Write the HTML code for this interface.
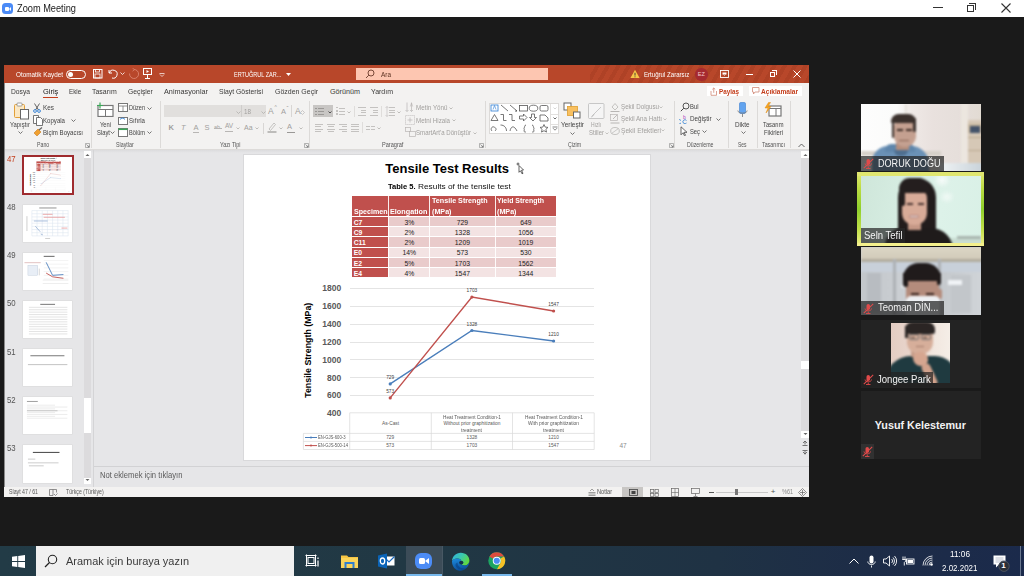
<!DOCTYPE html>
<html><head><meta charset="utf-8">
<style>
*{margin:0;padding:0;box-sizing:border-box}
html,body{width:1024px;height:576px;overflow:hidden;background:#1a1a1a;font-family:"Liberation Sans",sans-serif;position:relative}
.a{position:absolute}
.t{position:absolute;white-space:nowrap;line-height:1;transform-origin:0 0}
</style></head><body>
<div class="a" style="left:0;top:0;width:1024px;height:17px;background:#fff"></div>
<div class="a" style="left:2px;top:3px;width:11px;height:11px;border-radius:3.5px;background:#4b8bf7"></div>
<div class="a" style="left:4.5px;top:6.5px;width:4.5px;height:4px;border-radius:1px;background:#fff"></div>
<div class="a" style="left:8.5px;top:6.5px;width:0;height:0;border-top:2px solid transparent;border-bottom:2px solid transparent;border-right:2.5px solid #fff"></div>
<div class="t" style="left:17.00px;top:3.39px;font-size:10.5px;color:#1a1a1a;transform:scaleX(0.879)">Zoom Meeting</div>
<div class="a" style="left:933px;top:7px;width:10px;height:1px;background:#333"></div>
<div class="a" style="left:967px;top:4.5px;width:7px;height:7px;border:1px solid #333"></div>
<div class="a" style="left:969px;top:2.5px;width:7px;height:7px;border-top:1px solid #333;border-right:1px solid #333"></div>
<svg class="a" style="left:1000px;top:2px" width="12" height="12"><path d="M1.5 1.5L10.5 10.5M10.5 1.5L1.5 10.5" stroke="#333" stroke-width="1.1"/></svg>
<div class="a" style="left:4px;top:65px;width:805px;height:432px;background:#f3f2f1"></div>
<div class="a" style="left:4px;top:65px;width:805px;height:18px;background:#b8472a"></div>
<div class="a" style="left:590px;top:65px;width:219px;height:18px;background:repeating-linear-gradient(120deg,rgba(0,0,0,0) 0px,rgba(0,0,0,0) 5px,rgba(90,20,0,.10) 5px,rgba(90,20,0,.10) 9px)"></div>
<div class="t" style="left:15.70px;top:70.63px;font-size:7px;color:#fff;transform:scaleX(0.908)">Otomatik Kaydet</div>
<div class="a" style="left:66px;top:69.5px;width:20px;height:9px;border:1px solid #fff;border-radius:4.5px"></div>
<div class="a" style="left:68px;top:71.5px;width:5px;height:5px;border-radius:2.5px;background:#fff"></div>
<svg class="a" style="left:93px;top:69px" width="10" height="10"><rect x="0.5" y="0.5" width="8.5" height="8.5" fill="none" stroke="#fff" stroke-width="1"/><rect x="2.5" y="0.5" width="4" height="2.5" fill="none" stroke="#fff" stroke-width=".8"/><rect x="2" y="5" width="5" height="4" fill="none" stroke="#fff" stroke-width=".8"/></svg>
<svg class="a" style="left:107px;top:68px" width="12" height="12"><path d="M2 2v3h3M2.3 5A4 4 0 1 1 5 10" fill="none" stroke="#fff" stroke-width="1"/></svg>
<svg class="a" style="left:120px;top:72px" width="5" height="4"><path d="M.5 .5L2.5 2.5 4.5 .5" fill="none" stroke="#fff" stroke-width=".8"/></svg>
<svg class="a" style="left:128px;top:68px" width="12" height="12"><path d="M6 1.5A4.5 4.5 0 1 1 1.6 5.5" fill="none" stroke="#d9806a" stroke-width="1"/><path d="M4.5 .2L6.5 1.6 4.6 3.2" fill="none" stroke="#d9806a" stroke-width=".9"/></svg>
<svg class="a" style="left:143px;top:68px" width="10" height="12"><rect x="0.5" y="0.5" width="8" height="6" fill="none" stroke="#fff"/><path d="M3.5 2l2.5 1.5-2.5 1.5z" fill="#fff"/><path d="M4.5 7v3M2 10.5h5" stroke="#fff"/></svg>
<svg class="a" style="left:159px;top:72px" width="6" height="5"><path d="M.5 1.5h5M1 2.5L3 4.5 5 2.5" fill="none" stroke="#fff" stroke-width=".7"/></svg>
<div class="t" style="left:233.70px;top:70.63px;font-size:7px;color:#fff;transform:scaleX(0.790)">ERTUĞRUL ZAR...</div>
<svg class="a" style="left:286px;top:72.5px" width="5" height="4"><path d="M0 0h5L2.5 3z" fill="#fff"/></svg>
<div class="a" style="left:356px;top:67.5px;width:192px;height:12.5px;background:#fdc6b1"></div>
<svg class="a" style="left:365px;top:68.5px" width="10" height="10"><circle cx="6" cy="4" r="3" fill="none" stroke="#6a3a2a" stroke-width=".9"/><path d="M3.8 6.2L1 9" stroke="#6a3a2a" stroke-width=".9"/></svg>
<div class="t" style="left:381.00px;top:70.63px;font-size:7px;color:#5a3020;transform:scaleX(0.917)">Ara</div>
<svg class="a" style="left:630px;top:68.5px" width="10" height="10"><path d="M5 .8L9.6 9H.4z" fill="#f7c648"/><path d="M5 3.8v2.8M5 7.4v.9" stroke="#333" stroke-width=".9"/></svg>
<div class="t" style="left:643.60px;top:70.63px;font-size:7px;color:#fff;transform:scaleX(0.871)">Ertuğrul Zararsız</div>
<div class="a" style="left:695px;top:68px;width:12.5px;height:12.5px;border-radius:6.25px;background:#a52a30"></div>
<div class="t" style="left:697.78px;top:71.65px;font-size:5.5px;color:#f4c8c8">EZ</div>
<svg class="a" style="left:720px;top:69.5px" width="10" height="9"><rect x=".5" y=".5" width="8" height="7" fill="none" stroke="#fff" stroke-width=".9"/><path d="M2.5 2.5h4v2h-4z" fill="#fff"/><path d="M3.5 4.5L4.5 5.5 5.5 4.5" fill="none" stroke="#fff" stroke-width=".6"/></svg>
<div class="a" style="left:746px;top:74px;width:6.5px;height:1px;background:#fff"></div>
<div class="a" style="left:770px;top:71.5px;width:5px;height:5px;border:1px solid #fff"></div>
<div class="a" style="left:772px;top:70px;width:5px;height:5px;border-top:1px solid #fff;border-right:1px solid #fff"></div>
<svg class="a" style="left:792px;top:69px" width="10" height="10"><path d="M1.5 1.5L8.5 8.5M8.5 1.5L1.5 8.5" stroke="#fff" stroke-width="1"/></svg>
<div class="t" style="left:11.40px;top:88.03px;font-size:7.2px;color:#3b3a39;transform:scaleX(0.933)">Dosya</div>
<div class="t" style="left:43.00px;top:88.03px;font-size:7.2px;color:#222;transform:scaleX(1.035)">Giriş</div>
<div class="t" style="left:68.80px;top:88.03px;font-size:7.2px;color:#3b3a39;transform:scaleX(0.872)">Ekle</div>
<div class="t" style="left:92.30px;top:88.03px;font-size:7.2px;color:#3b3a39;transform:scaleX(0.966)">Tasarım</div>
<div class="t" style="left:128.00px;top:88.03px;font-size:7.2px;color:#3b3a39;transform:scaleX(0.940)">Geçişler</div>
<div class="t" style="left:164.00px;top:88.03px;font-size:7.2px;color:#3b3a39;transform:scaleX(1.010)">Animasyonlar</div>
<div class="t" style="left:219.00px;top:88.03px;font-size:7.2px;color:#3b3a39;transform:scaleX(0.949)">Slayt Gösterisi</div>
<div class="t" style="left:275.00px;top:88.03px;font-size:7.2px;color:#3b3a39;transform:scaleX(0.970)">Gözden Geçir</div>
<div class="t" style="left:330.00px;top:88.03px;font-size:7.2px;color:#3b3a39">Görünüm</div>
<div class="t" style="left:371.00px;top:88.03px;font-size:7.2px;color:#3b3a39;transform:scaleX(0.972)">Yardım</div>
<div class="a" style="left:43px;top:96.6px;width:15.3px;height:1.6px;background:#c43e1c"></div>
<div class="a" style="left:707px;top:85.7px;width:36px;height:10.7px;background:#fff"></div>
<svg class="a" style="left:709.5px;top:86.5px" width="8" height="9"><path d="M1 4v4.3h5.5V4M3.75 1v4.8M2.3 2.4L3.75 1l1.45 1.4" fill="none" stroke="#d08a78" stroke-width=".8"/></svg>
<div class="t" style="left:719.00px;top:87.73px;font-size:7.2px;color:#c43e1c;font-weight:bold;transform:scaleX(0.878)">Paylaş</div>
<div class="a" style="left:749px;top:85.7px;width:53px;height:10.7px;background:#fff"></div>
<svg class="a" style="left:752px;top:87px" width="8" height="8"><path d="M.5 .5h6.5v4.5H3L1.5 7V5H.5z" fill="none" stroke="#d08a78" stroke-width=".8"/></svg>
<div class="t" style="left:761.00px;top:87.73px;font-size:7.2px;color:#c43e1c;font-weight:bold;transform:scaleX(0.917)">Açıklamalar</div>
<svg class="a" style="left:13px;top:102px" width="18" height="18"><rect x="1.5" y="2.5" width="10" height="13" rx="1" fill="#fbe8c4" stroke="#e2a038" stroke-width="1"/><rect x="4" y="1" width="5" height="3" rx=".8" fill="#fff" stroke="#888" stroke-width=".8"/><rect x="7.5" y="7.5" width="8" height="9.5" fill="#fff" stroke="#666" stroke-width="1"/></svg>
<div class="t" style="left:10.20px;top:121.13px;font-size:7px;color:#444;transform:scaleX(0.847)">Yapıştır</div>
<svg class="a" style="left:17.5px;top:131.0px" width="5" height="3.0"><path d="M.5 .5L2.5 2.5L4.5 .5" fill="none" stroke="#555" stroke-width=".8"/></svg>
<svg class="a" style="left:33px;top:103px" width="8" height="10"><path d="M1.5 .5L5.5 7M6.5 .5L2.5 7" stroke="#555" stroke-width=".9" fill="none"/><circle cx="2" cy="8" r="1.4" fill="none" stroke="#2b7cd3" stroke-width=".9"/><circle cx="6" cy="8" r="1.4" fill="none" stroke="#2b7cd3" stroke-width=".9"/></svg>
<div class="t" style="left:43.00px;top:104.33px;font-size:7px;color:#444;transform:scaleX(0.912)">Kes</div>
<svg class="a" style="left:33px;top:115px" width="10" height="11"><path d="M.5 .5h5v8h-5z" fill="#fff" stroke="#555" stroke-width=".8"/><path d="M3.5 2.5h4l2 2v6h-6z" fill="#fff" stroke="#555" stroke-width=".8"/></svg>
<div class="t" style="left:43.00px;top:116.63px;font-size:7px;color:#444;transform:scaleX(0.870)">Kopyala</div>
<svg class="a" style="left:71.0px;top:119.0px" width="5" height="3.0"><path d="M.5 .5L2.5 2.5L4.5 .5" fill="none" stroke="#555" stroke-width=".8"/></svg>
<svg class="a" style="left:33px;top:127px" width="10" height="10"><path d="M1 6l4-4 3 3-4 4z" fill="#f0a030" stroke="#c77a20" stroke-width=".6"/><path d="M6 3l3-2.5" stroke="#666" stroke-width="1.2"/></svg>
<div class="t" style="left:43.00px;top:129.03px;font-size:7px;color:#444;transform:scaleX(0.871)">Biçim Boyacısı</div>
<div class="t" style="left:36.80px;top:141.87px;font-size:6.5px;color:#555;transform:scaleX(0.803)">Pano</div>
<svg class="a" style="left:85px;top:142.5px" width="5" height="5"><path d="M.5 .5h4v4h-4z" fill="none" stroke="#888" stroke-width=".6"/><path d="M1.5 1.5L4 4M2.5 4H4V2.5" fill="none" stroke="#666" stroke-width=".6"/></svg>
<div class="a" style="left:90.5px;top:101px;width:1px;height:47px;background:#dcdad8"></div>
<svg class="a" style="left:96px;top:102px" width="18" height="15"><rect x="2" y="3.5" width="15" height="11" fill="#fff" stroke="#777" stroke-width="1.2"/><path d="M2 7.5h15M9.5 7.5v7" stroke="#777" stroke-width="1"/><path d="M4 .5v6M1 3.5h6" stroke="#3aa757" stroke-width="1.2"/></svg>
<div class="t" style="left:99.80px;top:120.83px;font-size:7px;color:#444;transform:scaleX(0.822)">Yeni</div>
<div class="t" style="left:96.50px;top:128.83px;font-size:7px;color:#444;transform:scaleX(0.835)">Slayt</div>
<svg class="a" style="left:109.5px;top:131.0px" width="5" height="3.0"><path d="M.5 .5L2.5 2.5L4.5 .5" fill="none" stroke="#555" stroke-width=".8"/></svg>
<svg class="a" style="left:118px;top:103px" width="10" height="9"><rect x=".5" y=".5" width="9" height="8" fill="#fff" stroke="#777" stroke-width="1"/><path d="M.5 3h9M5 3v5.5" stroke="#777" stroke-width=".8"/></svg>
<div class="t" style="left:129.00px;top:104.23px;font-size:7px;color:#444;transform:scaleX(0.791)">Düzen</div>
<svg class="a" style="left:147.0px;top:106.6px" width="5" height="3.0"><path d="M.5 .5L2.5 2.5L4.5 .5" fill="none" stroke="#555" stroke-width=".8"/></svg>
<svg class="a" style="left:118px;top:115.5px" width="10" height="9"><rect x=".5" y="1.5" width="9" height="7" fill="#fff" stroke="#777" stroke-width="1"/><path d="M2 3.5a3 3 0 0 1 5 0" fill="none" stroke="#2b7cd3" stroke-width=".9"/></svg>
<div class="t" style="left:129.00px;top:116.63px;font-size:7px;color:#444;transform:scaleX(0.874)">Sıfırla</div>
<svg class="a" style="left:118px;top:127.5px" width="10" height="9"><rect x=".5" y=".5" width="9" height="8" fill="#fff" stroke="#777" stroke-width="1"/><path d="M.5 1.3h9" stroke="#3aa757" stroke-width="1.5"/></svg>
<div class="t" style="left:129.00px;top:128.93px;font-size:7px;color:#444;transform:scaleX(0.806)">Bölüm</div>
<svg class="a" style="left:147.0px;top:131.3px" width="5" height="3.0"><path d="M.5 .5L2.5 2.5L4.5 .5" fill="none" stroke="#555" stroke-width=".8"/></svg>
<div class="t" style="left:116.00px;top:141.87px;font-size:6.5px;color:#555;transform:scaleX(0.816)">Slaytlar</div>
<div class="a" style="left:160px;top:101px;width:1px;height:47px;background:#dcdad8"></div>
<div class="a" style="left:164.4px;top:105.3px;width:76.6px;height:12.2px;background:#e1dfdd"></div>
<div class="a" style="left:241px;top:105.3px;width:24.6px;height:12.2px;background:#e1dfdd;border-left:1px solid #cfcdcb"></div>
<svg class="a" style="left:236.0px;top:110.5px" width="5" height="3.0"><path d="M.5 .5L2.5 2.5L4.5 .5" fill="none" stroke="#b0aeac" stroke-width=".8"/></svg>
<svg class="a" style="left:260.5px;top:110.5px" width="5" height="3.0"><path d="M.5 .5L2.5 2.5L4.5 .5" fill="none" stroke="#b0aeac" stroke-width=".8"/></svg>
<div class="t" style="left:244.00px;top:108.13px;font-size:7px;color:#a19f9d;transform:scaleX(0.898)">18</div>
<div class="t" style="left:268.00px;top:106.90px;font-size:8.5px;color:#a19f9d">A</div>
<div class="t" style="left:274.50px;top:105.09px;font-size:5px;color:#a19f9d">^</div>
<div class="t" style="left:281.00px;top:107.89px;font-size:7.5px;color:#a19f9d">A</div>
<div class="t" style="left:286.50px;top:105.11px;font-size:6px;color:#a19f9d">ˇ</div>
<div class="a" style="left:291px;top:105px;width:1px;height:12px;background:#d8d6d4"></div>
<div class="t" style="left:295.00px;top:106.90px;font-size:8.5px;color:#a19f9d">A</div>
<svg class="a" style="left:300px;top:110px" width="5" height="5"><path d="M.5 2.5L2.5 .5 4.5 2.5 2.5 4.5z" fill="none" stroke="#b8b6b4" stroke-width=".7"/></svg>
<div class="t" style="left:168.50px;top:124.19px;font-size:7.5px;color:#a19f9d;font-weight:bold">K</div>
<div class="t" style="left:181.00px;top:124.19px;font-size:7.5px;color:#a19f9d;font-style:italic">T</div>
<div class="t" style="left:193.50px;top:124.19px;font-size:7.5px;color:#a19f9d">A</div>
<div class="a" style="left:193px;top:131.5px;width:6px;height:.8px;background:#b8b6b4"></div>
<div class="t" style="left:204.50px;top:124.19px;font-size:7.5px;color:#a19f9d">S</div>
<div class="t" style="left:214.00px;top:125.15px;font-size:5.5px;color:#a19f9d">ab</div>
<div class="a" style="left:213.5px;top:127.5px;width:8px;height:.7px;background:#b8b6b4"></div>
<div class="t" style="left:225.00px;top:123.37px;font-size:6.5px;color:#a19f9d">AV</div>
<div class="a" style="left:225px;top:131px;width:8px;height:.6px;background:#b8b6b4"></div>
<svg class="a" style="left:236.0px;top:127.25px" width="4" height="2.5"><path d="M.5 .5L2.0 2.0L3.5 .5" fill="none" stroke="#b0aeac" stroke-width=".8"/></svg>
<div class="t" style="left:244.00px;top:124.43px;font-size:7px;color:#a19f9d">Aa</div>
<svg class="a" style="left:255.0px;top:127.25px" width="4" height="2.5"><path d="M.5 .5L2.0 2.0L3.5 .5" fill="none" stroke="#b0aeac" stroke-width=".8"/></svg>
<div class="a" style="left:263px;top:123px;width:1px;height:11px;background:#d8d6d4"></div>
<svg class="a" style="left:267px;top:121px" width="10" height="12"><path d="M2 8l5-6 1.5 1.5-5 6z" fill="none" stroke="#b8b6b4" stroke-width=".8"/><path d="M.5 11h9" stroke="#9a9896" stroke-width="1.2"/></svg>
<svg class="a" style="left:279.0px;top:127.25px" width="4" height="2.5"><path d="M.5 .5L2.0 2.0L3.5 .5" fill="none" stroke="#b0aeac" stroke-width=".8"/></svg>
<div class="t" style="left:287.00px;top:123.19px;font-size:7.5px;color:#a19f9d">A</div>
<div class="a" style="left:286.5px;top:131.5px;width:8px;height:1.2px;background:#9a9896"></div>
<svg class="a" style="left:298.5px;top:127.25px" width="4" height="2.5"><path d="M.5 .5L2.0 2.0L3.5 .5" fill="none" stroke="#b0aeac" stroke-width=".8"/></svg>
<div class="t" style="left:220.00px;top:141.87px;font-size:6.5px;color:#555;transform:scaleX(0.838)">Yazı Tipi</div>
<svg class="a" style="left:304px;top:142.5px" width="5" height="5"><path d="M.5 .5h4v4h-4z" fill="none" stroke="#888" stroke-width=".6"/><path d="M1.5 1.5L4 4M2.5 4H4V2.5" fill="none" stroke="#666" stroke-width=".6"/></svg>
<div class="a" style="left:308.5px;top:101px;width:1px;height:47px;background:#dcdad8"></div>
<div class="a" style="left:313px;top:105.4px;width:20px;height:12px;background:#c8c6c4"></div>
<div class="a" style="left:315px;top:107.5px;width:1.5px;height:1.2px;background:#9a9896"></div>
<div class="a" style="left:318px;top:107.5px;width:6px;height:.8px;background:#9a9896"></div>
<div class="a" style="left:315px;top:110.7px;width:1.5px;height:1.2px;background:#9a9896"></div>
<div class="a" style="left:318px;top:110.7px;width:6px;height:.8px;background:#9a9896"></div>
<div class="a" style="left:315px;top:113.9px;width:1.5px;height:1.2px;background:#9a9896"></div>
<div class="a" style="left:318px;top:113.9px;width:6px;height:.8px;background:#9a9896"></div>
<svg class="a" style="left:327.5px;top:110.75px" width="4" height="2.5"><path d="M.5 .5L2.0 2.0L3.5 .5" fill="none" stroke="#333" stroke-width=".8"/></svg>
<div class="a" style="left:336px;top:107.0px;width:1.5px;height:1.4px;background:#c4c2c0"></div>
<div class="a" style="left:339px;top:107.5px;width:6px;height:.8px;background:#c4c2c0"></div>
<div class="a" style="left:336px;top:110.2px;width:1.5px;height:1.4px;background:#c4c2c0"></div>
<div class="a" style="left:339px;top:110.7px;width:6px;height:.8px;background:#c4c2c0"></div>
<div class="a" style="left:336px;top:113.4px;width:1.5px;height:1.4px;background:#c4c2c0"></div>
<div class="a" style="left:339px;top:113.9px;width:6px;height:.8px;background:#c4c2c0"></div>
<svg class="a" style="left:347.0px;top:110.75px" width="4" height="2.5"><path d="M.5 .5L2.0 2.0L3.5 .5" fill="none" stroke="#b0aeac" stroke-width=".8"/></svg>
<div class="a" style="left:354px;top:106px;width:1px;height:11px;background:#dfdddb"></div>
<div class="a" style="left:358px;top:107.0px;width:8px;height:.8px;background:#c4c2c0"></div>
<div class="a" style="left:361px;top:109.5px;width:5px;height:.8px;background:#c4c2c0"></div>
<div class="a" style="left:361px;top:112.0px;width:5px;height:.8px;background:#c4c2c0"></div>
<div class="a" style="left:358px;top:114.5px;width:8px;height:.8px;background:#c4c2c0"></div>
<div class="a" style="left:370px;top:107.0px;width:8px;height:.8px;background:#c4c2c0"></div>
<div class="a" style="left:373px;top:109.5px;width:5px;height:.8px;background:#c4c2c0"></div>
<div class="a" style="left:373px;top:112.0px;width:5px;height:.8px;background:#c4c2c0"></div>
<div class="a" style="left:370px;top:114.5px;width:8px;height:.8px;background:#c4c2c0"></div>
<div class="a" style="left:381px;top:106px;width:1px;height:11px;background:#dfdddb"></div>
<div class="a" style="left:389px;top:107.0px;width:6px;height:.8px;background:#c4c2c0"></div>
<div class="a" style="left:389px;top:109.5px;width:6px;height:.8px;background:#c4c2c0"></div>
<div class="a" style="left:389px;top:112.0px;width:6px;height:.8px;background:#c4c2c0"></div>
<div class="a" style="left:389px;top:114.5px;width:6px;height:.8px;background:#c4c2c0"></div>
<svg class="a" style="left:385px;top:106px" width="4" height="11"><path d="M2 .5v10M.5 2L2 .5 3.5 2M.5 9L2 10.5 3.5 9" fill="none" stroke="#c4c2c0" stroke-width=".7"/></svg>
<svg class="a" style="left:396.5px;top:110.75px" width="4" height="2.5"><path d="M.5 .5L2.0 2.0L3.5 .5" fill="none" stroke="#b0aeac" stroke-width=".8"/></svg>
<div class="a" style="left:315px;top:124.0px;width:8px;height:.8px;background:#c4c2c0"></div>
<div class="a" style="left:315px;top:126.3px;width:5.5px;height:.8px;background:#c4c2c0"></div>
<div class="a" style="left:315px;top:128.6px;width:8px;height:.8px;background:#c4c2c0"></div>
<div class="a" style="left:315px;top:130.9px;width:5.5px;height:.8px;background:#c4c2c0"></div>
<div class="a" style="left:327px;top:124.0px;width:8px;height:.8px;background:#c4c2c0"></div>
<div class="a" style="left:328.25px;top:126.3px;width:5.5px;height:.8px;background:#c4c2c0"></div>
<div class="a" style="left:327px;top:128.6px;width:8px;height:.8px;background:#c4c2c0"></div>
<div class="a" style="left:328.25px;top:130.9px;width:5.5px;height:.8px;background:#c4c2c0"></div>
<div class="a" style="left:339px;top:124.0px;width:8px;height:.8px;background:#c4c2c0"></div>
<div class="a" style="left:341.5px;top:126.3px;width:5.5px;height:.8px;background:#c4c2c0"></div>
<div class="a" style="left:339px;top:128.6px;width:8px;height:.8px;background:#c4c2c0"></div>
<div class="a" style="left:341.5px;top:130.9px;width:5.5px;height:.8px;background:#c4c2c0"></div>
<div class="a" style="left:351px;top:124.0px;width:8px;height:.8px;background:#c4c2c0"></div>
<div class="a" style="left:351px;top:126.3px;width:8px;height:.8px;background:#c4c2c0"></div>
<div class="a" style="left:351px;top:128.6px;width:8px;height:.8px;background:#c4c2c0"></div>
<div class="a" style="left:351px;top:130.9px;width:8px;height:.8px;background:#c4c2c0"></div>
<div class="a" style="left:362px;top:122px;width:1px;height:11px;background:#dfdddb"></div>
<div class="a" style="left:366px;top:126px;width:3.5px;height:.8px;background:#c4c2c0"></div><div class="a" style="left:371px;top:126px;width:3.5px;height:.8px;background:#c4c2c0"></div>
<div class="a" style="left:366px;top:129px;width:3.5px;height:.8px;background:#c4c2c0"></div><div class="a" style="left:371px;top:129px;width:3.5px;height:.8px;background:#c4c2c0"></div>
<svg class="a" style="left:376.5px;top:127.25px" width="4" height="2.5"><path d="M.5 .5L2.0 2.0L3.5 .5" fill="none" stroke="#b0aeac" stroke-width=".8"/></svg>
<svg class="a" style="left:405px;top:102px" width="9" height="11"><path d="M2 .5v9M.5 8L2 9.5 3.5 8M6.5 .5v9M5 8l1.5 1.5L8 8" fill="none" stroke="#b8b6b4" stroke-width=".7"/><path d="M5.3 4.5l1.2-3.5 1.2 3.5" fill="none" stroke="#b8b6b4" stroke-width=".6"/></svg>
<div class="t" style="left:415.50px;top:103.93px;font-size:7px;color:#a19f9d;transform:scaleX(0.892)">Metin Yönü</div>
<svg class="a" style="left:448.5px;top:106.55px" width="4" height="2.5"><path d="M.5 .5L2.0 2.0L3.5 .5" fill="none" stroke="#b0aeac" stroke-width=".8"/></svg>
<svg class="a" style="left:404.5px;top:115px" width="10" height="10"><rect x=".5" y=".5" width="9" height="9" fill="none" stroke="#b8b6b4" stroke-width=".7" stroke-dasharray="1.2 .8"/><path d="M2.5 5h5M5 2.5v5" stroke="#b8b6b4" stroke-width=".7"/></svg>
<div class="t" style="left:415.50px;top:116.63px;font-size:7px;color:#a19f9d;transform:scaleX(0.883)">Metni Hizala</div>
<svg class="a" style="left:451.5px;top:119.25px" width="4" height="2.5"><path d="M.5 .5L2.0 2.0L3.5 .5" fill="none" stroke="#b0aeac" stroke-width=".8"/></svg>
<svg class="a" style="left:404.5px;top:127px" width="11" height="10"><rect x=".5" y=".5" width="5" height="4" fill="none" stroke="#b8b6b4" stroke-width=".7"/><rect x="4.5" y="4.5" width="6" height="5" fill="none" stroke="#b8b6b4" stroke-width=".7"/></svg>
<div class="t" style="left:415.50px;top:128.93px;font-size:7px;color:#a19f9d;transform:scaleX(0.870)">SmartArt'a Dönüştür</div>
<svg class="a" style="left:472.5px;top:131.55px" width="4" height="2.5"><path d="M.5 .5L2.0 2.0L3.5 .5" fill="none" stroke="#b0aeac" stroke-width=".8"/></svg>
<div class="t" style="left:381.60px;top:142.17px;font-size:6.5px;color:#555;transform:scaleX(0.858)">Paragraf</div>
<svg class="a" style="left:479px;top:142.5px" width="5" height="5"><path d="M.5 .5h4v4h-4z" fill="none" stroke="#888" stroke-width=".6"/><path d="M1.5 1.5L4 4M2.5 4H4V2.5" fill="none" stroke="#666" stroke-width=".6"/></svg>
<div class="a" style="left:484.6px;top:101px;width:1px;height:47px;background:#dcdad8"></div>
<div class="a" style="left:488.8px;top:102.9px;width:70px;height:31.3px;background:#fff;border:1px solid #dcdad8"></div>
<div class="a" style="left:550.3px;top:103.5px;width:1px;height:30px;background:#e2e0de"></div>
<div class="a" style="left:550.8px;top:113.5px;width:7.5px;height:1px;background:#e2e0de"></div><div class="a" style="left:550.8px;top:123.5px;width:7.5px;height:1px;background:#e2e0de"></div>
<svg class="a" style="left:553.0px;top:107.25px" width="4" height="2.5"><path d="M.5 .5L2.0 2.0L3.5 .5" fill="none" stroke="#ccc" stroke-width=".8"/></svg>
<svg class="a" style="left:553.0px;top:117.25px" width="4" height="2.5"><path d="M.5 .5L2.0 2.0L3.5 .5" fill="none" stroke="#444" stroke-width=".8"/></svg>
<svg class="a" style="left:552px;top:126px" width="6" height="5"><path d="M.5 1h5M1 2.2l2 2 2-2" fill="none" stroke="#555" stroke-width=".7"/></svg>
<svg class="a" style="left:490px;top:104px" width="60" height="30" fill="none" stroke="#555" stroke-width=".8"><rect x="1" y="1" width="7" height="6" stroke="#2b7cd3"/><path d="M3 5.5l1.5-4 1.5 4" stroke="#2b7cd3" stroke-width=".6"/><path d="M11 1l7 6M20 1l7 6"/><path d="M25.5 6l1.5 1-1.8.3" /><rect x="29.5" y="1.5" width="8" height="5.5"/><ellipse cx="43.5" cy="4.2" rx="4.3" ry="3"/><rect x="50" y="1.5" width="8" height="5.5" rx="1.5"/><path d="M1 16.5l3.5-6 3.5 6z"/><path d="M10.5 10.5h3v6h3"/><path d="M19 10.5h3v6h3"/><path d="M29.5 12h4v-2l3.5 3.5-3.5 3.5v-2h-4z"/><path d="M41.5 10h3v3.5h2l-3.5 3.5-3.5-3.5h2z"/><path d="M50 17v-6h5l3 3v3z"/><path d="M2 27c-2-2 0-5 2-4s3 2 1 4M10.5 21c4 0 6 3 6 6M20 27c1-5 4-6 7 0M36 21c-2 0-1 3-2 3s1 0 0 3c0 1 1 1 2 1M42 21c2 0 1 3 2 3s-1 0 0 3c0 1-1 1-2 1"/><path d="M54 20.5l1.2 2.6 2.8.3-2.1 1.9.6 2.8-2.5-1.4-2.5 1.4.6-2.8-2.1-1.9 2.8-.3z"/></svg>
<svg class="a" style="left:563px;top:102px" width="18" height="17"><rect x="1" y="1" width="7" height="7" fill="#fff" stroke="#666" stroke-width="1"/><rect x="4.5" y="4.5" width="10" height="9" fill="#f8c060" stroke="#e0a030" stroke-width=".8"/><rect x="10.5" y="10" width="6.5" height="6" fill="#fff" stroke="#666" stroke-width="1"/></svg>
<div class="t" style="left:560.50px;top:121.03px;font-size:7px;color:#444;transform:scaleX(0.919)">Yerleştir</div>
<svg class="a" style="left:570.0px;top:131.5px" width="5" height="3.0"><path d="M.5 .5L2.5 2.5L4.5 .5" fill="none" stroke="#555" stroke-width=".8"/></svg>
<svg class="a" style="left:587.5px;top:102.5px" width="17" height="16"><rect x=".5" y=".5" width="15.5" height="15" rx="1" fill="#f5f5f5" stroke="#bbb" stroke-width=".8"/><path d="M4 13l9-9" stroke="#c8c8c8" stroke-width="1"/><path d="M3 14c2-.5 2.5-1.5 3-3" fill="none" stroke="#bbb" stroke-width=".8"/></svg>
<div class="t" style="left:591.00px;top:121.03px;font-size:7px;color:#a19f9d;transform:scaleX(0.714)">Hızlı</div>
<div class="t" style="left:589.00px;top:129.03px;font-size:7px;color:#a19f9d;transform:scaleX(0.856)">Stiller</div>
<svg class="a" style="left:605.0px;top:131.65px" width="4" height="2.5"><path d="M.5 .5L2.0 2.0L3.5 .5" fill="none" stroke="#b8b6b4" stroke-width=".8"/></svg>
<svg class="a" style="left:610px;top:102px" width="10" height="10"><path d="M2 5l3-3.5 3 3.5-3 3z" fill="none" stroke="#b8b6b4" stroke-width=".8"/><path d="M.5 9.5h9" stroke="#b8b6b4" stroke-width="1"/></svg>
<div class="t" style="left:620.50px;top:103.43px;font-size:7px;color:#a19f9d;transform:scaleX(0.888)">Şekil Dolgusu</div>
<svg class="a" style="left:659.0px;top:106.05px" width="4" height="2.5"><path d="M.5 .5L2.0 2.0L3.5 .5" fill="none" stroke="#b8b6b4" stroke-width=".8"/></svg>
<svg class="a" style="left:610px;top:113.5px" width="10" height="10"><rect x=".5" y=".5" width="7" height="6" fill="none" stroke="#b8b6b4" stroke-width=".7"/><path d="M3 5l4-4" stroke="#b8b6b4" stroke-width=".9"/><path d="M.5 9h9" stroke="#b8b6b4" stroke-width="1"/></svg>
<div class="t" style="left:620.50px;top:115.13px;font-size:7px;color:#a19f9d;transform:scaleX(0.893)">Şekil Ana Hattı</div>
<svg class="a" style="left:662.5px;top:117.75px" width="4" height="2.5"><path d="M.5 .5L2.0 2.0L3.5 .5" fill="none" stroke="#b8b6b4" stroke-width=".8"/></svg>
<svg class="a" style="left:610px;top:125.5px" width="10" height="10"><ellipse cx="5" cy="5" rx="4.3" ry="3.5" fill="none" stroke="#b8b6b4" stroke-width=".8"/><path d="M1.5 7.5l7-5" stroke="#b8b6b4" stroke-width=".7"/></svg>
<div class="t" style="left:620.50px;top:126.83px;font-size:7px;color:#a19f9d;transform:scaleX(0.943)">Şekil Efektleri</div>
<svg class="a" style="left:660.5px;top:129.45px" width="4" height="2.5"><path d="M.5 .5L2.0 2.0L3.5 .5" fill="none" stroke="#b8b6b4" stroke-width=".8"/></svg>
<div class="t" style="left:568.00px;top:141.87px;font-size:6.5px;color:#555;transform:scaleX(0.800)">Çizim</div>
<svg class="a" style="left:668.5px;top:142.5px" width="5" height="5"><path d="M.5 .5h4v4h-4z" fill="none" stroke="#888" stroke-width=".6"/><path d="M1.5 1.5L4 4M2.5 4H4V2.5" fill="none" stroke="#666" stroke-width=".6"/></svg>
<div class="a" style="left:674px;top:101px;width:1px;height:47px;background:#dcdad8"></div>
<svg class="a" style="left:679.5px;top:102px" width="10" height="10"><circle cx="6" cy="4" r="3" fill="none" stroke="#444" stroke-width=".9"/><path d="M3.8 6.2L.8 9.2" stroke="#444" stroke-width="1"/></svg>
<div class="t" style="left:690.00px;top:103.13px;font-size:7px;color:#444;transform:scaleX(0.840)">Bul</div>
<svg class="a" style="left:678.5px;top:114px" width="10" height="10"><text x="4" y="4.5" font-size="5" fill="#b146c2" font-family="Liberation Sans">b</text><path d="M2 6.5a2 2 0 1 0 0 2.5" fill="none" stroke="#2b7cd3" stroke-width=".8"/><path d="M7.5 6.5a2 2 0 1 0 0 2.5" fill="none" stroke="#2b7cd3" stroke-width=".8"/></svg>
<div class="t" style="left:690.00px;top:115.43px;font-size:7px;color:#444;transform:scaleX(0.906)">Değiştir</div>
<svg class="a" style="left:716.0px;top:117.8px" width="5" height="3.0"><path d="M.5 .5L2.5 2.5L4.5 .5" fill="none" stroke="#555" stroke-width=".8"/></svg>
<svg class="a" style="left:680px;top:126px" width="8" height="10"><path d="M1 .8v8l2-2 1.5 3 1-.5-1.5-3h3z" fill="#fff" stroke="#444" stroke-width=".8"/></svg>
<div class="t" style="left:690.00px;top:127.63px;font-size:7px;color:#444;transform:scaleX(0.829)">Seç</div>
<svg class="a" style="left:701.5px;top:130.0px" width="5" height="3.0"><path d="M.5 .5L2.5 2.5L4.5 .5" fill="none" stroke="#555" stroke-width=".8"/></svg>
<div class="t" style="left:687.00px;top:141.87px;font-size:6.5px;color:#555;transform:scaleX(0.806)">Düzenleme</div>
<div class="a" style="left:727.7px;top:101px;width:1px;height:47px;background:#dcdad8"></div>
<svg class="a" style="left:737px;top:102px" width="11" height="16"><rect x="2.5" y=".5" width="6" height="11" rx="1.3" fill="#63a4ef" stroke="#3c7fd0" stroke-width=".6"/><path d="M.8 8.5c0 3.5 9.4 3.5 9.4 0" fill="none" stroke="#777" stroke-width=".8"/><path d="M5.5 12v3" stroke="#777" stroke-width=".8"/></svg>
<div class="t" style="left:735.25px;top:121.03px;font-size:7px;color:#444;transform:scaleX(0.909)">Dikte</div>
<svg class="a" style="left:740.5px;top:131.3px" width="5" height="3.0"><path d="M.5 .5L2.5 2.5L4.5 .5" fill="none" stroke="#555" stroke-width=".8"/></svg>
<div class="t" style="left:737.75px;top:141.87px;font-size:6.5px;color:#555;transform:scaleX(0.759)">Ses</div>
<div class="a" style="left:757.4px;top:101px;width:1px;height:47px;background:#dcdad8"></div>
<svg class="a" style="left:764px;top:102px" width="18" height="15"><rect x="5" y="4" width="12" height="10" fill="#fff" stroke="#777" stroke-width="1.2"/><path d="M5 6.5h12M12 6.5v7.5" stroke="#777" stroke-width="1"/><path d="M4.5 .5L1 6h3l-2 5 5-6.5H4l2.5-4z" fill="#f5a623" stroke="#e08a10" stroke-width=".5"/></svg>
<div class="t" style="left:763.25px;top:121.03px;font-size:7px;color:#444;transform:scaleX(0.823)">Tasarım</div>
<div class="t" style="left:764.00px;top:129.43px;font-size:7px;color:#444;transform:scaleX(0.842)">Fikirleri</div>
<div class="t" style="left:762.00px;top:141.87px;font-size:6.5px;color:#555;transform:scaleX(0.816)">Tasarımcı</div>
<div class="a" style="left:789.6px;top:101px;width:1px;height:47px;background:#dcdad8"></div>
<svg class="a" style="left:798px;top:143px" width="7" height="5"><path d="M.5 4L3.5 1 6.5 4" fill="none" stroke="#555" stroke-width=".9"/></svg>
<div class="a" style="left:4px;top:149px;width:805px;height:1px;background:#dddbd9"></div>
<div class="a" style="left:4px;top:150px;width:805px;height:337px;background:#e6e6e8"></div>
<div class="a" style="left:4px;top:150px;width:805px;height:3px;background:linear-gradient(#dcdcde,#e6e6e8)"></div>
<div class="a" style="left:4px;top:83px;width:1px;height:414px;background:#8a8a8a"></div>
<div class="a" style="left:83.5px;top:151px;width:7.5px;height:332px;background:#dcdbdd"></div>
<div class="a" style="left:84px;top:151px;width:6.5px;height:7px;background:#fff"></div>
<svg class="a" style="left:85px;top:153px" width="5" height="3"><path d="M.5 3L2.5 1 4.5 3z" fill="#666"/></svg>
<div class="a" style="left:84px;top:477.5px;width:6.5px;height:6px;background:#fff"></div>
<svg class="a" style="left:85px;top:479px" width="5" height="3"><path d="M.5 0L2.5 2 4.5 0z" fill="#666"/></svg>
<div class="a" style="left:84px;top:397.5px;width:6.5px;height:35.5px;background:#fff"></div>
<div class="a" style="left:93px;top:150px;width:1px;height:337px;background:#d4d4d6"></div>
<div class="t" style="left:6.60px;top:155.36px;font-size:8.8px;color:#c43e1c;transform:scaleX(0.888)">47</div>
<div class="a" style="left:21.5px;top:154.5px;width:52.5px;height:40.5px;border:2px solid #9f2b2f;background:#fff"></div>
<div class="t" style="left:6.60px;top:203.36px;font-size:8.8px;color:#555;transform:scaleX(0.888)">48</div>
<div class="a" style="left:22.9px;top:204.5px;width:49.3px;height:37.2px;background:#fff;box-shadow:0 0 0 .5px #d8d8d8"></div>
<svg class="a" style="left:22.9px;top:204.5px" width="49.3" height="37.2"><path d="M16.269 2.9760000000000004H33.524" stroke="#888" stroke-width=".9"/><path d="M8.873999999999999 5.58H45.356" stroke="#d9e2ef" stroke-width=".5"/><path d="M8.873999999999999 8.742H45.356" stroke="#d9e2ef" stroke-width=".5"/><path d="M8.873999999999999 11.904000000000002H45.356" stroke="#d9e2ef" stroke-width=".5"/><path d="M8.873999999999999 15.066000000000003H45.356" stroke="#d9e2ef" stroke-width=".5"/><path d="M8.873999999999999 18.228H45.356" stroke="#d9e2ef" stroke-width=".5"/><path d="M8.873999999999999 21.390000000000004H45.356" stroke="#d9e2ef" stroke-width=".5"/><path d="M8.873999999999999 24.552000000000003H45.356" stroke="#d9e2ef" stroke-width=".5"/><path d="M8.873999999999999 27.714000000000006H45.356" stroke="#d9e2ef" stroke-width=".5"/><path d="M8.873999999999999 30.876000000000005H45.356" stroke="#d9e2ef" stroke-width=".5"/><path d="M8.873999999999999 5.58V30.876" stroke="#d9e2ef" stroke-width=".5"/><path d="M14.050499999999998 5.58V30.876" stroke="#d9e2ef" stroke-width=".5"/><path d="M19.227 5.58V30.876" stroke="#d9e2ef" stroke-width=".5"/><path d="M24.403499999999998 5.58V30.876" stroke="#d9e2ef" stroke-width=".5"/><path d="M29.58 5.58V30.876" stroke="#d9e2ef" stroke-width=".5"/><path d="M34.7565 5.58V30.876" stroke="#d9e2ef" stroke-width=".5"/><path d="M39.933 5.58V30.876" stroke="#d9e2ef" stroke-width=".5"/><path d="M45.1095 5.58V30.876" stroke="#d9e2ef" stroke-width=".5"/><path d="M19.72 9.3H29.58M20.706 12.276000000000002H41.904999999999994M38.454 23.064H44.37" stroke="#e58a8a" stroke-width=".7"/><path d="M10.846 15.996H24.65M12.325 21.204L17.255 26.784000000000002" stroke="#8aa6cf" stroke-width=".7"/><path d="M17.747999999999998 29.016000000000002L19.72 29.760000000000005" stroke="#8aa6cf" stroke-width=".7"/><path d="M3.944 11.16V26.04" stroke="#bbb" stroke-width=".7"/><path d="M22.185 33.480000000000004H27.115000000000002" stroke="#bbb" stroke-width=".7"/></svg>
<div class="t" style="left:6.60px;top:251.46px;font-size:8.8px;color:#555;transform:scaleX(0.888)">49</div>
<div class="a" style="left:22.9px;top:252.6px;width:49.3px;height:37.2px;background:#fff;box-shadow:0 0 0 .5px #d8d8d8"></div>
<svg class="a" style="left:22.9px;top:252.6px" width="49.3" height="37.2"><path d="M20.706 3.3480000000000003H31.552" stroke="#666" stroke-width="1"/><path d="M1.4789999999999999 9.672H17.747999999999998" stroke="#c99" stroke-width=".6"/><rect x="4.93" y="12.276000000000002" width="9.86" height="10.044000000000002" fill="#e8eef6" stroke="#bcc8d8" stroke-width=".4"/><path d="M20.706 7.440000000000001H45.356" stroke="#e6e6e6" stroke-width=".5"/><path d="M20.706 11.160000000000002H45.356" stroke="#e6e6e6" stroke-width=".5"/><path d="M20.706 14.880000000000003H45.356" stroke="#e6e6e6" stroke-width=".5"/><path d="M20.706 18.6H45.356" stroke="#e6e6e6" stroke-width=".5"/><path d="M20.706 22.320000000000004H45.356" stroke="#e6e6e6" stroke-width=".5"/><path d="M20.706 26.04H45.356" stroke="#e6e6e6" stroke-width=".5"/><polyline points="23.170999999999996,9.3 29.58,22.32 40.425999999999995,21.576" fill="none" stroke="#4f81bd" stroke-width=".9"/><polyline points="23.170999999999996,20.088000000000005 29.58,23.808000000000003 40.425999999999995,25.296000000000003" fill="none" stroke="#c0504d" stroke-width=".9"/><path d="M19.72 27.156000000000002H45.356M19.72 30.504H45.356" stroke="#ddd" stroke-width=".5"/><path d="M16.269 15.624V22.32" stroke="#bbb" stroke-width=".6"/></svg>
<div class="t" style="left:6.60px;top:299.46px;font-size:8.8px;color:#555;transform:scaleX(0.888)">50</div>
<div class="a" style="left:22.9px;top:300.6px;width:49.3px;height:37.2px;background:#fff;box-shadow:0 0 0 .5px #d8d8d8"></div>
<svg class="a" style="left:22.9px;top:300.6px" width="49.3" height="37.2"><path d="M17.255 3.3480000000000003H32.045" stroke="#777" stroke-width="1"/><path d="M5.9159999999999995 6.324000000000001H44.37" stroke="#c8c8c8" stroke-width=".5"/><path d="M5.9159999999999995 8.742H44.37" stroke="#c8c8c8" stroke-width=".5"/><path d="M5.9159999999999995 11.160000000000002H44.37" stroke="#c8c8c8" stroke-width=".5"/><path d="M5.9159999999999995 13.578000000000001H44.37" stroke="#c8c8c8" stroke-width=".5"/><path d="M5.9159999999999995 15.996000000000002H44.37" stroke="#c8c8c8" stroke-width=".5"/><path d="M5.9159999999999995 18.414H44.37" stroke="#c8c8c8" stroke-width=".5"/><path d="M5.9159999999999995 20.832000000000004H44.37" stroke="#c8c8c8" stroke-width=".5"/><path d="M5.9159999999999995 23.25H44.37" stroke="#c8c8c8" stroke-width=".5"/><path d="M5.9159999999999995 25.668000000000003H44.37" stroke="#c8c8c8" stroke-width=".5"/><path d="M5.9159999999999995 28.086000000000002H44.37" stroke="#c8c8c8" stroke-width=".5"/><path d="M5.9159999999999995 30.504000000000005H44.37" stroke="#c8c8c8" stroke-width=".5"/><path d="M5.9159999999999995 32.922000000000004H44.37" stroke="#c8c8c8" stroke-width=".5"/></svg>
<div class="t" style="left:6.60px;top:347.86px;font-size:8.8px;color:#555;transform:scaleX(0.888)">51</div>
<div class="a" style="left:22.9px;top:349px;width:49.3px;height:37.2px;background:#fff;box-shadow:0 0 0 .5px #d8d8d8"></div>
<svg class="a" style="left:22.9px;top:349px" width="49.3" height="37.2"><path d="M7.395 6.696000000000001H41.412" stroke="#777" stroke-width="1.1"/><path d="M4.93 15.624H44.37" stroke="#aaa" stroke-width=".7"/></svg>
<div class="t" style="left:6.60px;top:396.06px;font-size:8.8px;color:#555;transform:scaleX(0.888)">52</div>
<div class="a" style="left:22.9px;top:397.2px;width:49.3px;height:37.2px;background:#fff;box-shadow:0 0 0 .5px #d8d8d8"></div>
<svg class="a" style="left:22.9px;top:397.2px" width="49.3" height="37.2"><path d="M3.944 4.464H14.79" stroke="#888" stroke-width=".8"/><path d="M3.944 8.184000000000001H32.045" stroke="#d4d4d4" stroke-width=".45"/><path d="M3.944 10.044000000000002H44.37" stroke="#d4d4d4" stroke-width=".45"/><path d="M3.944 11.904000000000002H32.045" stroke="#d4d4d4" stroke-width=".45"/><path d="M3.944 13.764000000000001H44.37" stroke="#d4d4d4" stroke-width=".45"/><path d="M3.944 15.624000000000002H32.045" stroke="#d4d4d4" stroke-width=".45"/><path d="M3.944 17.484H44.37" stroke="#d4d4d4" stroke-width=".45"/><path d="M3.944 19.344H32.045" stroke="#d4d4d4" stroke-width=".45"/><path d="M3.944 21.204000000000004H44.37" stroke="#d4d4d4" stroke-width=".45"/><path d="M3.944 13.764000000000001H34.51" stroke="#999" stroke-width=".5"/></svg>
<div class="t" style="left:6.60px;top:444.26px;font-size:8.8px;color:#555;transform:scaleX(0.888)">53</div>
<div class="a" style="left:22.9px;top:445.4px;width:49.3px;height:37.2px;background:#fff;box-shadow:0 0 0 .5px #d8d8d8"></div>
<svg class="a" style="left:22.9px;top:445.4px" width="49.3" height="37.2"><path d="M9.86 7.440000000000001H36.482" stroke="#555" stroke-width="1.1"/><path d="M4.93 14.136000000000001H12.325M4.93 17.856H35.495999999999995M5.9159999999999995 20.832000000000004H20.706" stroke="#aaa" stroke-width=".6"/></svg>
<div class="a" style="left:800.5px;top:150px;width:8.5px;height:288px;background:#dcdbdd"></div>
<div class="a" style="left:801px;top:151px;width:7.5px;height:7px;background:#fff"></div>
<svg class="a" style="left:802.5px;top:153px" width="5" height="3"><path d="M.5 3L2.5 1 4.5 3z" fill="#666"/></svg>
<div class="a" style="left:801px;top:360.7px;width:7.5px;height:8px;background:#fff"></div>
<div class="a" style="left:801px;top:430.5px;width:7.5px;height:7px;background:#fff"></div>
<svg class="a" style="left:802.5px;top:433px" width="5" height="3"><path d="M.5 0L2.5 2 4.5 0z" fill="#666"/></svg>
<svg class="a" style="left:801.5px;top:440px" width="6" height="16"><path d="M3 1v3.5M1 3l2-2 2 2M.5 5.5h5M.5 10.5h5M1 12l2 2 2-2M3 11v3.5" fill="none" stroke="#555" stroke-width=".8"/></svg>
<div class="a" style="left:94px;top:466px;width:715px;height:1px;background:#d2d2d4"></div>
<div class="t" style="left:99.50px;top:471.46px;font-size:9px;color:#5a5a5a;transform:scaleX(0.850)">Not eklemek için tıklayın</div>
<div class="a" style="left:243px;top:154px;width:408px;height:307px;background:#d9d9db"></div>
<div class="a" style="left:244px;top:155px;width:406px;height:305px;background:#fff"></div>
<div class="a" style="left:4px;top:487px;width:805px;height:10px;background:#f3f2f1"></div>
<div class="t" style="left:9.00px;top:489.17px;font-size:6.5px;color:#555;transform:scaleX(0.802)">Slayt 47 / 61</div>
<svg class="a" style="left:48.5px;top:488.5px" width="9" height="8"><path d="M.5 .5h3.5v6H.5zM4 .5h3.5v3" fill="none" stroke="#666" stroke-width=".7"/><path d="M5 5l1.5 1.5L8.5 4.5" fill="none" stroke="#666" stroke-width=".7"/></svg>
<div class="t" style="left:66.00px;top:489.17px;font-size:6.5px;color:#555;transform:scaleX(0.795)">Türkçe (Türkiye)</div>
<svg class="a" style="left:587.5px;top:488px" width="8" height="8"><path d="M.5 4.5h7M.5 6h7M.5 7.5h7M2 3L4 1l2 2" fill="none" stroke="#666" stroke-width=".6"/></svg>
<div class="t" style="left:597.00px;top:489.17px;font-size:6.5px;color:#555;transform:scaleX(0.865)">Notlar</div>
<div class="a" style="left:622px;top:487px;width:21px;height:10px;background:#c8c6c4"></div>
<svg class="a" style="left:628.5px;top:488.5px" width="9" height="7"><rect x=".5" y=".5" width="8" height="6" fill="none" stroke="#444" stroke-width=".8"/><rect x="2.5" y="2" width="4" height="3" fill="#444"/></svg>
<svg class="a" style="left:649.5px;top:488.5px" width="9" height="8"><rect x=".5" y=".5" width="3.3" height="2.8" fill="none" stroke="#666" stroke-width=".7"/><rect x="5" y=".5" width="3.3" height="2.8" fill="none" stroke="#666" stroke-width=".7"/><rect x=".5" y="4.5" width="3.3" height="2.8" fill="none" stroke="#666" stroke-width=".7"/><rect x="5" y="4.5" width="3.3" height="2.8" fill="none" stroke="#666" stroke-width=".7"/></svg>
<svg class="a" style="left:671px;top:488px" width="8" height="9"><rect x=".5" y=".5" width="7" height="8" fill="none" stroke="#666" stroke-width=".7"/><path d="M4 .5v8M.5 4.5h7" stroke="#666" stroke-width=".6"/></svg>
<svg class="a" style="left:691px;top:488px" width="9" height="9"><rect x=".5" y=".5" width="8" height="5" fill="none" stroke="#666" stroke-width=".7"/><path d="M4.5 5.5v2.5M2.5 8.5h4" stroke="#666" stroke-width=".7"/></svg>
<div class="a" style="left:708.5px;top:491.8px;width:5px;height:.8px;background:#555"></div>
<div class="a" style="left:716px;top:492px;width:52px;height:.6px;background:#c8c8c8"></div>
<div class="a" style="left:735px;top:489px;width:2.5px;height:6px;background:#777"></div>
<div class="t" style="left:770.66px;top:488.14px;font-size:8px;color:#555">+</div>
<div class="t" style="left:782.00px;top:489.17px;font-size:6.5px;color:#888;transform:scaleX(0.845)">%61</div>
<svg class="a" style="left:798px;top:487.5px" width="9" height="9"><path d="M4.5 .5L8.5 4.5 4.5 8.5 .5 4.5z M2 4.5h5M4.5 2v5" fill="none" stroke="#666" stroke-width=".7"/></svg>
<div class="t" style="left:385.30px;top:161.50px;font-size:13px;color:#000;font-weight:bold">Tensile Test Results</div>
<svg class="a" style="left:515px;top:162px" width="11" height="13"><path d="M3 .5v3M1.5 2h3" stroke="#222" stroke-width=".7"/><path d="M4 3.5l4.5 4.5-2 .3 1.5 3-1 .5-1.5-3-1.5 1.5z" fill="#fff" stroke="#222" stroke-width=".7"/></svg>
<div class="t" style="left:388.40px;top:182.93px;font-size:8px;color:#000;font-weight:bold;transform:scaleX(0.942)">Table 5.</div>
<div class="t" style="left:417.50px;top:182.93px;font-size:8px;color:#111;transform:scaleX(1.038)">Results of the tensile test</div>
<div class="a" style="left:351.7px;top:195.6px;width:204.59999999999997px;height:20.200000000000017px;background:#c0504d"></div>
<div class="a" style="left:351.7px;top:216.8px;width:36.5px;height:9.399999999999999px;background:#c0504d"></div>
<div class="a" style="left:388.2px;top:216.8px;width:168.09999999999997px;height:9.399999999999999px;background:#e9cbcb"></div>
<div class="t" style="left:353.70px;top:219.62px;font-size:6.8px;color:#fff;font-weight:bold">C7</div>
<div class="t" style="left:404.44px;top:219.62px;font-size:6.8px;color:#222">3%</div>
<div class="t" style="left:456.73px;top:219.62px;font-size:6.8px;color:#222">729</div>
<div class="t" style="left:520.13px;top:219.62px;font-size:6.8px;color:#222">649</div>
<div class="a" style="left:351.7px;top:227.1px;width:36.5px;height:9.399999999999999px;background:#c0504d"></div>
<div class="a" style="left:388.2px;top:227.1px;width:168.09999999999997px;height:9.399999999999999px;background:#f3e3e3"></div>
<div class="t" style="left:353.70px;top:229.92px;font-size:6.8px;color:#fff;font-weight:bold">C9</div>
<div class="t" style="left:404.44px;top:229.92px;font-size:6.8px;color:#222">2%</div>
<div class="t" style="left:454.84px;top:229.92px;font-size:6.8px;color:#222">1328</div>
<div class="t" style="left:518.24px;top:229.92px;font-size:6.8px;color:#222">1056</div>
<div class="a" style="left:351.7px;top:237.4px;width:36.5px;height:9.399999999999999px;background:#c0504d"></div>
<div class="a" style="left:388.2px;top:237.4px;width:168.09999999999997px;height:9.399999999999999px;background:#e9cbcb"></div>
<div class="t" style="left:353.70px;top:240.22px;font-size:6.8px;color:#fff;font-weight:bold">C11</div>
<div class="t" style="left:404.44px;top:240.22px;font-size:6.8px;color:#222">2%</div>
<div class="t" style="left:454.84px;top:240.22px;font-size:6.8px;color:#222">1209</div>
<div class="t" style="left:518.24px;top:240.22px;font-size:6.8px;color:#222">1019</div>
<div class="a" style="left:351.7px;top:247.6px;width:36.5px;height:9.399999999999999px;background:#c0504d"></div>
<div class="a" style="left:388.2px;top:247.6px;width:168.09999999999997px;height:9.399999999999999px;background:#f3e3e3"></div>
<div class="t" style="left:353.70px;top:250.42px;font-size:6.8px;color:#fff;font-weight:bold">E0</div>
<div class="t" style="left:402.55px;top:250.42px;font-size:6.8px;color:#222">14%</div>
<div class="t" style="left:456.73px;top:250.42px;font-size:6.8px;color:#222">573</div>
<div class="t" style="left:520.13px;top:250.42px;font-size:6.8px;color:#222">530</div>
<div class="a" style="left:351.7px;top:257.8px;width:36.5px;height:9.399999999999999px;background:#c0504d"></div>
<div class="a" style="left:388.2px;top:257.8px;width:168.09999999999997px;height:9.399999999999999px;background:#e9cbcb"></div>
<div class="t" style="left:353.70px;top:260.62px;font-size:6.8px;color:#fff;font-weight:bold">E2</div>
<div class="t" style="left:404.44px;top:260.62px;font-size:6.8px;color:#222">5%</div>
<div class="t" style="left:454.84px;top:260.62px;font-size:6.8px;color:#222">1703</div>
<div class="t" style="left:518.24px;top:260.62px;font-size:6.8px;color:#222">1562</div>
<div class="a" style="left:351.7px;top:268px;width:36.5px;height:9.399999999999999px;background:#c0504d"></div>
<div class="a" style="left:388.2px;top:268px;width:168.09999999999997px;height:9.399999999999999px;background:#f3e3e3"></div>
<div class="t" style="left:353.70px;top:270.82px;font-size:6.8px;color:#fff;font-weight:bold">E4</div>
<div class="t" style="left:404.44px;top:270.82px;font-size:6.8px;color:#222">4%</div>
<div class="t" style="left:454.84px;top:270.82px;font-size:6.8px;color:#222">1547</div>
<div class="t" style="left:518.24px;top:270.82px;font-size:6.8px;color:#222">1344</div>
<div class="a" style="left:387.7px;top:195.6px;width:1px;height:82.4px;background:#fff;opacity:.9"></div>
<div class="a" style="left:429.0px;top:195.6px;width:1px;height:82.4px;background:#fff;opacity:.9"></div>
<div class="a" style="left:494.8px;top:195.6px;width:1px;height:82.4px;background:#fff;opacity:.9"></div>
<div class="t" style="left:353.70px;top:208.82px;font-size:6.6px;color:#fff;font-weight:bold;transform:scaleX(1.075)">Specimen</div>
<div class="t" style="left:390.20px;top:208.82px;font-size:6.6px;color:#fff;font-weight:bold;transform:scaleX(1.100)">Elongation</div>
<div class="t" style="left:431.50px;top:198.32px;font-size:6.6px;color:#fff;font-weight:bold;transform:scaleX(1.085)">Tensile Strength</div>
<div class="t" style="left:431.50px;top:209.12px;font-size:6.6px;color:#fff;font-weight:bold;transform:scaleX(1.086)">(MPa)</div>
<div class="t" style="left:497.30px;top:198.32px;font-size:6.6px;color:#fff;font-weight:bold;transform:scaleX(1.057)">Yield Strength</div>
<div class="t" style="left:497.30px;top:209.12px;font-size:6.6px;color:#fff;font-weight:bold;transform:scaleX(1.086)">(MPa)</div>
<div class="a" style="left:349.6px;top:395.06px;width:244.6px;height:.8px;background:#e4e4e4"></div>
<div class="a" style="left:349.6px;top:377.21px;width:244.6px;height:.8px;background:#e4e4e4"></div>
<div class="a" style="left:349.6px;top:359.37px;width:244.6px;height:.8px;background:#e4e4e4"></div>
<div class="a" style="left:349.6px;top:341.53px;width:244.6px;height:.8px;background:#e4e4e4"></div>
<div class="a" style="left:349.6px;top:323.69px;width:244.6px;height:.8px;background:#e4e4e4"></div>
<div class="a" style="left:349.6px;top:305.84px;width:244.6px;height:.8px;background:#e4e4e4"></div>
<div class="a" style="left:349.6px;top:288.00px;width:244.6px;height:.8px;background:#e4e4e4"></div>
<div class="t" style="left:327.01px;top:409.20px;font-size:8.5px;color:#595959;font-weight:bold">400</div>
<div class="t" style="left:327.01px;top:391.36px;font-size:8.5px;color:#595959;font-weight:bold">600</div>
<div class="t" style="left:327.01px;top:373.52px;font-size:8.5px;color:#595959;font-weight:bold">800</div>
<div class="t" style="left:322.28px;top:355.67px;font-size:8.5px;color:#595959;font-weight:bold">1000</div>
<div class="t" style="left:322.28px;top:337.83px;font-size:8.5px;color:#595959;font-weight:bold">1200</div>
<div class="t" style="left:322.28px;top:319.99px;font-size:8.5px;color:#595959;font-weight:bold">1400</div>
<div class="t" style="left:322.28px;top:302.15px;font-size:8.5px;color:#595959;font-weight:bold">1600</div>
<div class="t" style="left:322.28px;top:284.30px;font-size:8.5px;color:#595959;font-weight:bold">1800</div>
<div class="t" style="left:258.4px;top:346.4px;width:100px;text-align:center;font-size:8.5px;font-weight:bold;color:#000;transform-origin:center;transform:rotate(-90deg) scaleX(1.04)">Tensile Strength (MPa)</div>
<svg class="a" style="left:0;top:0" width="1024" height="576"><polyline points="390.2,383.9 471.9,330.5 553.6,341.0" fill="none" stroke="#4a7ebb" stroke-width="1.4"/><polyline points="390.2,397.9 471.9,297.1 553.6,311.0" fill="none" stroke="#c0504d" stroke-width="1.4"/><circle cx="390.2" cy="383.9" r="1.6" fill="#4a7ebb"/><circle cx="471.9" cy="330.5" r="1.6" fill="#4a7ebb"/><circle cx="553.6" cy="341.0" r="1.6" fill="#4a7ebb"/><circle cx="390.2" cy="397.9" r="1.6" fill="#c0504d"/><circle cx="471.9" cy="297.1" r="1.6" fill="#c0504d"/><circle cx="553.6" cy="311.0" r="1.6" fill="#c0504d"/><path d="M349.7 412.8H594.2M303.4 433.4H594.2M303.4 441.4H594.2M303.4 449.5H594.2" stroke="#d9d9d9" stroke-width=".7"/><path d="M349.7 412.8V449.5M431.3 412.8V449.5M512.5 412.8V449.5M594.2 412.8V449.5M303.4 433.4V449.5" stroke="#d9d9d9" stroke-width=".7"/><path d="M305 437.5H317" stroke="#4a7ebb" stroke-width="1"/><circle cx="311" cy="437.5" r="1" fill="#4a7ebb"/><path d="M305 445.6H317" stroke="#c0504d" stroke-width="1"/><circle cx="311" cy="445.6" r="1" fill="#c0504d"/></svg>
<div class="t" style="left:386.19px;top:376.33px;font-size:4.8px;color:#404040">729</div>
<div class="t" style="left:466.56px;top:322.90px;font-size:4.8px;color:#404040">1328</div>
<div class="t" style="left:548.26px;top:333.42px;font-size:4.8px;color:#404040">1210</div>
<div class="t" style="left:386.19px;top:390.25px;font-size:4.8px;color:#404040">573</div>
<div class="t" style="left:466.56px;top:289.44px;font-size:4.8px;color:#404040">1703</div>
<div class="t" style="left:548.26px;top:303.36px;font-size:4.8px;color:#404040">1547</div>
<div class="t" style="left:381.97px;top:422.29px;font-size:4.8px;color:#595959">As-Cast</div>
<div class="t" style="left:442.90px;top:415.89px;font-size:4.8px;color:#595959;transform:scaleX(0.984)">Heat Treatment Condition-1</div>
<div class="t" style="left:443.40px;top:422.29px;font-size:4.8px;color:#595959">Without prior graphitization</div>
<div class="t" style="left:461.40px;top:428.69px;font-size:4.8px;color:#595959;transform:scaleX(1.036)">treatment</div>
<div class="t" style="left:524.60px;top:415.89px;font-size:4.8px;color:#595959;transform:scaleX(0.984)">Heat Treatment Condition-1</div>
<div class="t" style="left:528.10px;top:422.29px;font-size:4.8px;color:#595959;transform:scaleX(1.012)">With prior graphitization</div>
<div class="t" style="left:543.10px;top:428.69px;font-size:4.8px;color:#595959;transform:scaleX(1.036)">treatment</div>
<div class="t" style="left:317.50px;top:436.29px;font-size:4.8px;color:#595959;transform:scaleX(0.874)">EN-GJS-600-3</div>
<div class="t" style="left:317.50px;top:444.39px;font-size:4.8px;color:#595959;transform:scaleX(0.879)">EN-GJS-500-14</div>
<div class="t" style="left:386.19px;top:436.29px;font-size:4.8px;color:#595959">729</div>
<div class="t" style="left:386.19px;top:444.39px;font-size:4.8px;color:#595959">573</div>
<div class="t" style="left:466.56px;top:436.29px;font-size:4.8px;color:#595959">1328</div>
<div class="t" style="left:466.56px;top:444.39px;font-size:4.8px;color:#595959">1703</div>
<div class="t" style="left:548.26px;top:436.29px;font-size:4.8px;color:#595959">1210</div>
<div class="t" style="left:548.26px;top:444.39px;font-size:4.8px;color:#595959">1547</div>
<div class="t" style="left:619.38px;top:442.87px;font-size:6.5px;color:#8c8c8c">47</div>
<div class="a" style="left:0;top:0;width:1024px;height:576px;transform-origin:244px 155px;transform:translate(-220.5px,1.5px) scale(0.11946)">
<div class="t" style="left:385.30px;top:161.50px;font-size:13px;color:#000;font-weight:bold">Tensile Test Results</div>
<svg class="a" style="left:515px;top:162px" width="11" height="13"><path d="M3 .5v3M1.5 2h3" stroke="#222" stroke-width=".7"/><path d="M4 3.5l4.5 4.5-2 .3 1.5 3-1 .5-1.5-3-1.5 1.5z" fill="#fff" stroke="#222" stroke-width=".7"/></svg>
<div class="t" style="left:388.40px;top:182.93px;font-size:8px;color:#000;font-weight:bold;transform:scaleX(0.942)">Table 5.</div>
<div class="t" style="left:417.50px;top:182.93px;font-size:8px;color:#111;transform:scaleX(1.038)">Results of the tensile test</div>
<div class="a" style="left:351.7px;top:195.6px;width:204.59999999999997px;height:20.200000000000017px;background:#c0504d"></div>
<div class="a" style="left:351.7px;top:216.8px;width:36.5px;height:9.399999999999999px;background:#c0504d"></div>
<div class="a" style="left:388.2px;top:216.8px;width:168.09999999999997px;height:9.399999999999999px;background:#e9cbcb"></div>
<div class="t" style="left:353.70px;top:219.62px;font-size:6.8px;color:#fff;font-weight:bold">C7</div>
<div class="t" style="left:404.44px;top:219.62px;font-size:6.8px;color:#222">3%</div>
<div class="t" style="left:456.73px;top:219.62px;font-size:6.8px;color:#222">729</div>
<div class="t" style="left:520.13px;top:219.62px;font-size:6.8px;color:#222">649</div>
<div class="a" style="left:351.7px;top:227.1px;width:36.5px;height:9.399999999999999px;background:#c0504d"></div>
<div class="a" style="left:388.2px;top:227.1px;width:168.09999999999997px;height:9.399999999999999px;background:#f3e3e3"></div>
<div class="t" style="left:353.70px;top:229.92px;font-size:6.8px;color:#fff;font-weight:bold">C9</div>
<div class="t" style="left:404.44px;top:229.92px;font-size:6.8px;color:#222">2%</div>
<div class="t" style="left:454.84px;top:229.92px;font-size:6.8px;color:#222">1328</div>
<div class="t" style="left:518.24px;top:229.92px;font-size:6.8px;color:#222">1056</div>
<div class="a" style="left:351.7px;top:237.4px;width:36.5px;height:9.399999999999999px;background:#c0504d"></div>
<div class="a" style="left:388.2px;top:237.4px;width:168.09999999999997px;height:9.399999999999999px;background:#e9cbcb"></div>
<div class="t" style="left:353.70px;top:240.22px;font-size:6.8px;color:#fff;font-weight:bold">C11</div>
<div class="t" style="left:404.44px;top:240.22px;font-size:6.8px;color:#222">2%</div>
<div class="t" style="left:454.84px;top:240.22px;font-size:6.8px;color:#222">1209</div>
<div class="t" style="left:518.24px;top:240.22px;font-size:6.8px;color:#222">1019</div>
<div class="a" style="left:351.7px;top:247.6px;width:36.5px;height:9.399999999999999px;background:#c0504d"></div>
<div class="a" style="left:388.2px;top:247.6px;width:168.09999999999997px;height:9.399999999999999px;background:#f3e3e3"></div>
<div class="t" style="left:353.70px;top:250.42px;font-size:6.8px;color:#fff;font-weight:bold">E0</div>
<div class="t" style="left:402.55px;top:250.42px;font-size:6.8px;color:#222">14%</div>
<div class="t" style="left:456.73px;top:250.42px;font-size:6.8px;color:#222">573</div>
<div class="t" style="left:520.13px;top:250.42px;font-size:6.8px;color:#222">530</div>
<div class="a" style="left:351.7px;top:257.8px;width:36.5px;height:9.399999999999999px;background:#c0504d"></div>
<div class="a" style="left:388.2px;top:257.8px;width:168.09999999999997px;height:9.399999999999999px;background:#e9cbcb"></div>
<div class="t" style="left:353.70px;top:260.62px;font-size:6.8px;color:#fff;font-weight:bold">E2</div>
<div class="t" style="left:404.44px;top:260.62px;font-size:6.8px;color:#222">5%</div>
<div class="t" style="left:454.84px;top:260.62px;font-size:6.8px;color:#222">1703</div>
<div class="t" style="left:518.24px;top:260.62px;font-size:6.8px;color:#222">1562</div>
<div class="a" style="left:351.7px;top:268px;width:36.5px;height:9.399999999999999px;background:#c0504d"></div>
<div class="a" style="left:388.2px;top:268px;width:168.09999999999997px;height:9.399999999999999px;background:#f3e3e3"></div>
<div class="t" style="left:353.70px;top:270.82px;font-size:6.8px;color:#fff;font-weight:bold">E4</div>
<div class="t" style="left:404.44px;top:270.82px;font-size:6.8px;color:#222">4%</div>
<div class="t" style="left:454.84px;top:270.82px;font-size:6.8px;color:#222">1547</div>
<div class="t" style="left:518.24px;top:270.82px;font-size:6.8px;color:#222">1344</div>
<div class="a" style="left:387.7px;top:195.6px;width:1px;height:82.4px;background:#fff;opacity:.9"></div>
<div class="a" style="left:429.0px;top:195.6px;width:1px;height:82.4px;background:#fff;opacity:.9"></div>
<div class="a" style="left:494.8px;top:195.6px;width:1px;height:82.4px;background:#fff;opacity:.9"></div>
<div class="t" style="left:353.70px;top:208.82px;font-size:6.6px;color:#fff;font-weight:bold;transform:scaleX(1.075)">Specimen</div>
<div class="t" style="left:390.20px;top:208.82px;font-size:6.6px;color:#fff;font-weight:bold;transform:scaleX(1.100)">Elongation</div>
<div class="t" style="left:431.50px;top:198.32px;font-size:6.6px;color:#fff;font-weight:bold;transform:scaleX(1.085)">Tensile Strength</div>
<div class="t" style="left:431.50px;top:209.12px;font-size:6.6px;color:#fff;font-weight:bold;transform:scaleX(1.086)">(MPa)</div>
<div class="t" style="left:497.30px;top:198.32px;font-size:6.6px;color:#fff;font-weight:bold;transform:scaleX(1.057)">Yield Strength</div>
<div class="t" style="left:497.30px;top:209.12px;font-size:6.6px;color:#fff;font-weight:bold;transform:scaleX(1.086)">(MPa)</div>
<div class="a" style="left:349.6px;top:395.06px;width:244.6px;height:.8px;background:#e4e4e4"></div>
<div class="a" style="left:349.6px;top:377.21px;width:244.6px;height:.8px;background:#e4e4e4"></div>
<div class="a" style="left:349.6px;top:359.37px;width:244.6px;height:.8px;background:#e4e4e4"></div>
<div class="a" style="left:349.6px;top:341.53px;width:244.6px;height:.8px;background:#e4e4e4"></div>
<div class="a" style="left:349.6px;top:323.69px;width:244.6px;height:.8px;background:#e4e4e4"></div>
<div class="a" style="left:349.6px;top:305.84px;width:244.6px;height:.8px;background:#e4e4e4"></div>
<div class="a" style="left:349.6px;top:288.00px;width:244.6px;height:.8px;background:#e4e4e4"></div>
<div class="t" style="left:327.01px;top:409.20px;font-size:8.5px;color:#595959;font-weight:bold">400</div>
<div class="t" style="left:327.01px;top:391.36px;font-size:8.5px;color:#595959;font-weight:bold">600</div>
<div class="t" style="left:327.01px;top:373.52px;font-size:8.5px;color:#595959;font-weight:bold">800</div>
<div class="t" style="left:322.28px;top:355.67px;font-size:8.5px;color:#595959;font-weight:bold">1000</div>
<div class="t" style="left:322.28px;top:337.83px;font-size:8.5px;color:#595959;font-weight:bold">1200</div>
<div class="t" style="left:322.28px;top:319.99px;font-size:8.5px;color:#595959;font-weight:bold">1400</div>
<div class="t" style="left:322.28px;top:302.15px;font-size:8.5px;color:#595959;font-weight:bold">1600</div>
<div class="t" style="left:322.28px;top:284.30px;font-size:8.5px;color:#595959;font-weight:bold">1800</div>
<div class="t" style="left:258.4px;top:346.4px;width:100px;text-align:center;font-size:8.5px;font-weight:bold;color:#000;transform-origin:center;transform:rotate(-90deg) scaleX(1.04)">Tensile Strength (MPa)</div>
<svg class="a" style="left:0;top:0" width="1024" height="576"><polyline points="390.2,383.9 471.9,330.5 553.6,341.0" fill="none" stroke="#4a7ebb" stroke-width="1.4"/><polyline points="390.2,397.9 471.9,297.1 553.6,311.0" fill="none" stroke="#c0504d" stroke-width="1.4"/><circle cx="390.2" cy="383.9" r="1.6" fill="#4a7ebb"/><circle cx="471.9" cy="330.5" r="1.6" fill="#4a7ebb"/><circle cx="553.6" cy="341.0" r="1.6" fill="#4a7ebb"/><circle cx="390.2" cy="397.9" r="1.6" fill="#c0504d"/><circle cx="471.9" cy="297.1" r="1.6" fill="#c0504d"/><circle cx="553.6" cy="311.0" r="1.6" fill="#c0504d"/><path d="M349.7 412.8H594.2M303.4 433.4H594.2M303.4 441.4H594.2M303.4 449.5H594.2" stroke="#d9d9d9" stroke-width=".7"/><path d="M349.7 412.8V449.5M431.3 412.8V449.5M512.5 412.8V449.5M594.2 412.8V449.5M303.4 433.4V449.5" stroke="#d9d9d9" stroke-width=".7"/><path d="M305 437.5H317" stroke="#4a7ebb" stroke-width="1"/><circle cx="311" cy="437.5" r="1" fill="#4a7ebb"/><path d="M305 445.6H317" stroke="#c0504d" stroke-width="1"/><circle cx="311" cy="445.6" r="1" fill="#c0504d"/></svg>
<div class="t" style="left:386.19px;top:376.33px;font-size:4.8px;color:#404040">729</div>
<div class="t" style="left:466.56px;top:322.90px;font-size:4.8px;color:#404040">1328</div>
<div class="t" style="left:548.26px;top:333.42px;font-size:4.8px;color:#404040">1210</div>
<div class="t" style="left:386.19px;top:390.25px;font-size:4.8px;color:#404040">573</div>
<div class="t" style="left:466.56px;top:289.44px;font-size:4.8px;color:#404040">1703</div>
<div class="t" style="left:548.26px;top:303.36px;font-size:4.8px;color:#404040">1547</div>
<div class="t" style="left:381.97px;top:422.29px;font-size:4.8px;color:#595959">As-Cast</div>
<div class="t" style="left:442.90px;top:415.89px;font-size:4.8px;color:#595959;transform:scaleX(0.984)">Heat Treatment Condition-1</div>
<div class="t" style="left:443.40px;top:422.29px;font-size:4.8px;color:#595959">Without prior graphitization</div>
<div class="t" style="left:461.40px;top:428.69px;font-size:4.8px;color:#595959;transform:scaleX(1.036)">treatment</div>
<div class="t" style="left:524.60px;top:415.89px;font-size:4.8px;color:#595959;transform:scaleX(0.984)">Heat Treatment Condition-1</div>
<div class="t" style="left:528.10px;top:422.29px;font-size:4.8px;color:#595959;transform:scaleX(1.012)">With prior graphitization</div>
<div class="t" style="left:543.10px;top:428.69px;font-size:4.8px;color:#595959;transform:scaleX(1.036)">treatment</div>
<div class="t" style="left:317.50px;top:436.29px;font-size:4.8px;color:#595959;transform:scaleX(0.874)">EN-GJS-600-3</div>
<div class="t" style="left:317.50px;top:444.39px;font-size:4.8px;color:#595959;transform:scaleX(0.879)">EN-GJS-500-14</div>
<div class="t" style="left:386.19px;top:436.29px;font-size:4.8px;color:#595959">729</div>
<div class="t" style="left:386.19px;top:444.39px;font-size:4.8px;color:#595959">573</div>
<div class="t" style="left:466.56px;top:436.29px;font-size:4.8px;color:#595959">1328</div>
<div class="t" style="left:466.56px;top:444.39px;font-size:4.8px;color:#595959">1703</div>
<div class="t" style="left:548.26px;top:436.29px;font-size:4.8px;color:#595959">1210</div>
<div class="t" style="left:548.26px;top:444.39px;font-size:4.8px;color:#595959">1547</div>
<div class="t" style="left:619.38px;top:442.87px;font-size:6.5px;color:#8c8c8c">47</div>
</div>
<div class="a" style="left:860.5px;top:103.5px;width:120.5px;height:67.5px;overflow:hidden;background:linear-gradient(90deg,#fdfdfd 0%,#fbfbfa 30%,#efe9e6 42%,#e9e1de 60%,#e6dfdb 80%,#e2dbd3 100%)"><div class="a" style="left:0;top:0;width:121px;height:68px;filter:blur(.9px)"><div class="a" style="left:44px;top:0px;width:2px;height:50px;background:#e6e2dc;"></div><div class="a" style="left:0px;top:47px;width:80px;height:5px;background:#d6d0c9;"></div><div class="a" style="left:100px;top:0px;width:7px;height:64px;background:#ece6df;"></div><div class="a" style="left:107px;top:16px;width:14px;height:48px;background:#d6c8b6;"></div><div class="a" style="left:107px;top:20px;width:14px;height:9px;background:#c4b49c;"></div><div class="a" style="left:109px;top:22px;width:10px;height:7px;background:#44536a;"></div><div class="a" style="left:107px;top:33px;width:14px;height:1.5px;background:#b9a88f;"></div><div class="a" style="left:107px;top:46px;width:14px;height:1.5px;background:#b9a88f;"></div><div class="a" style="left:78px;top:59px;width:43px;height:9px;background:linear-gradient(90deg,#f0f3f5,#c9d3da);"></div><div class="a" style="left:11.5px;top:42px;width:57px;height:40px;background:#6a91b6;border-radius:16px 18px 0 0"></div><div class="a" style="left:24px;top:40px;width:30px;height:8px;background:#5f86ab;border-radius:6px 6px 0 0"></div><div class="a" style="left:33px;top:46px;width:14px;height:6px;background:#4f6f90;border-radius:0 0 6px 6px"></div><div class="a" style="left:35px;top:37px;width:13px;height:9px;background:#b48e7c;"></div><div class="a" style="left:33px;top:14.5px;width:22px;height:29px;background:#c4a090;border-radius:9px 9px 11px 11px"></div><div class="a" style="left:30.8px;top:10.7px;width:24.5px;height:9px;background:#3b312d;border-radius:12px 12px 2px 2px"></div><div class="a" style="left:31px;top:14px;width:2.8px;height:20px;background:#3b312d;border-radius:2px 0 3px 3px"></div><div class="a" style="left:52.5px;top:14px;width:2.8px;height:14px;background:#3b312d;border-radius:0 2px 3px 3px"></div><div class="a" style="left:36px;top:25.5px;width:6px;height:1.8px;background:#3a2a24;"></div><div class="a" style="left:45.5px;top:25.5px;width:6px;height:1.8px;background:#3a2a24;"></div><div class="a" style="left:38px;top:36px;width:10px;height:1.2px;background:#8a6555;"></div></div></div>
<div class="a" style="left:861px;top:156.3px;width:83px;height:14.699999999999989px;background:rgba(34,34,34,.72)"></div>
<svg class="a" style="left:863px;top:158.3px" width="11" height="11"><rect x="3.5" y="1" width="3.5" height="6" rx="1.75" fill="#e04a4a"/><path d="M2 5.5c0 3 6.5 3 6.5 0M5.25 8.5v2M3 10.5h4.5" fill="none" stroke="#e04a4a" stroke-width=".9"/><path d="M.8 10.2L10.2 .8" stroke="#e04a4a" stroke-width="1.1"/></svg>
<div class="t" style="left:877.50px;top:158.93px;font-size:10px;color:#f4f4f4;transform:scaleX(0.907)">DORUK DOĞU</div>
<div class="a" style="left:857px;top:172px;width:127px;height:74px;background:linear-gradient(180deg,#e2e872 0%,#bcdc44 22%,#8fd02c 50%,#c2e04a 78%,#f2f08a 100%)"></div>
<div class="a" style="left:857px;top:172px;width:127px;height:3.5px;background:#e0e670"></div>
<div class="a" style="left:857px;top:242.8px;width:127px;height:3.2px;background:#f4f08c"></div>
<div class="a" style="left:861px;top:175.5px;width:119.5px;height:67.5px;overflow:hidden;background:linear-gradient(100deg,#cfe6da 0%,#d6ede2 35%,#ddf2e9 65%,#d9f0e6 100%)"><div class="a" style="left:0;top:0;width:121px;height:68px;filter:blur(.9px)"><div class="a" style="left:72px;top:-4px;width:18px;height:16px;background:radial-gradient(closest-side,rgba(255,255,255,.8),rgba(255,255,255,0));"></div><div class="a" style="left:78px;top:14px;width:16px;height:14px;background:radial-gradient(closest-side,rgba(255,255,255,.6),rgba(255,255,255,0));"></div><div class="a" style="left:-2px;top:62px;width:124px;height:8px;background:#c9ddd2;"></div><div class="a" style="left:96px;top:60px;width:24px;height:3px;background:#aab6b0;"></div><div class="a" style="left:36.7px;top:2px;width:38px;height:60px;background:#221c1c;border-radius:19px 19px 8px 8px"></div><div class="a" style="left:24px;top:52px;width:68px;height:30px;background:#1f1b1b;border-radius:18px 22px 0 0"></div><div class="a" style="left:47px;top:44px;width:13px;height:10px;background:#c59886;"></div><div class="a" style="left:41px;top:13px;width:24.5px;height:36px;background:#d8ab98;border-radius:9px 9px 12px 12px"></div><div class="a" style="left:38px;top:2.5px;width:30px;height:15px;background:#241e1e;border-radius:15px 15px 4px 6px"></div><div class="a" style="left:39px;top:14px;width:5px;height:16px;background:#241e1e;border-radius:0 0 3px 3px"></div><div class="a" style="left:46px;top:27.5px;width:5.5px;height:1.8px;background:#4a3430;"></div><div class="a" style="left:57px;top:27.5px;width:5.5px;height:1.8px;background:#4a3430;"></div><div class="a" style="left:48px;top:39.5px;width:10px;height:3px;background:#b37e76;border-radius:2px"></div><div class="a" style="left:49px;top:40px;width:8px;height:1.2px;background:#eee;"></div></div></div>
<div class="a" style="left:861px;top:228px;width:44px;height:15px;background:rgba(40,40,40,.72)"></div>
<div class="t" style="left:864.00px;top:230.68px;font-size:10px;color:#f4f4f4;transform:scaleX(0.953)">Seln Tefil</div>
<div class="a" style="left:860.5px;top:247.3px;width:120.5px;height:67.5px;overflow:hidden;background:#c6cacf"><div class="a" style="left:0;top:0;width:121px;height:68px;filter:blur(.9px)"><div class="a" style="left:0px;top:0px;width:121px;height:12px;background:linear-gradient(#dcd6c6,#d2cbba);"></div><div class="a" style="left:0px;top:12px;width:121px;height:2.5px;background:#b2ad9f;"></div><div class="a" style="left:0px;top:14.5px;width:121px;height:10px;background:#c8d0da;"></div><div class="a" style="left:0px;top:24.5px;width:121px;height:44px;background:linear-gradient(90deg,#c2c6ca,#ccd0d4 40%,#c6cace 70%,#d0d4d8);"></div><div class="a" style="left:32px;top:12px;width:3.5px;height:56px;background:#aeb2b6;"></div><div class="a" style="left:77px;top:12px;width:3.5px;height:56px;background:#aeb2b6;"></div><div class="a" style="left:6px;top:26px;width:14px;height:40px;background:#b8bcc1;"></div><div class="a" style="left:90px;top:28px;width:20px;height:38px;background:#c2c6ca;"></div><div class="a" style="left:87px;top:33px;width:14px;height:5px;background:#f0f3f6;"></div><div class="a" style="left:40px;top:38px;width:7px;height:3px;background:#e6e8ea;"></div><div class="a" style="left:45px;top:30px;width:33px;height:40px;background:#b48c7c;border-radius:8px 8px 14px 14px"></div><div class="a" style="left:77px;top:42px;width:4px;height:10px;background:#b48c7c;border-radius:2px"></div><div class="a" style="left:42.5px;top:15.7px;width:38px;height:18px;background:#201b1b;border-radius:19px 19px 3px 3px"></div><div class="a" style="left:42.5px;top:26px;width:4.5px;height:14px;background:#201b1b;border-radius:0 0 2px 4px"></div><div class="a" style="left:76px;top:26px;width:4.5px;height:12px;background:#201b1b;border-radius:0 0 4px 2px"></div><div class="a" style="left:50px;top:45.5px;width:8px;height:2px;background:#3a2823;"></div><div class="a" style="left:65px;top:45.5px;width:8px;height:2px;background:#3a2823;"></div><div class="a" style="left:45px;top:48.5px;width:34px;height:22px;background:#eef0f3;border-radius:5px 5px 3px 3px"></div></div></div>
<div class="a" style="left:861px;top:301px;width:83px;height:14px;background:rgba(34,34,34,.72)"></div>
<svg class="a" style="left:863px;top:303px" width="11" height="11"><rect x="3.5" y="1" width="3.5" height="6" rx="1.75" fill="#e04a4a"/><path d="M2 5.5c0 3 6.5 3 6.5 0M5.25 8.5v2M3 10.5h4.5" fill="none" stroke="#e04a4a" stroke-width=".9"/><path d="M.8 10.2L10.2 .8" stroke="#e04a4a" stroke-width="1.1"/></svg>
<div class="t" style="left:877.50px;top:303.28px;font-size:10px;color:#f4f4f4;transform:scaleX(0.946)">Teoman DİN...</div>
<div class="a" style="left:860.5px;top:320px;width:120.5px;height:67.5px;background:#232323"></div>
<div class="a" style="left:890.9px;top:323.3px;width:59.6px;height:59.7px;overflow:hidden;background:linear-gradient(90deg,#e4cdc3 0%,#ead8cf 45%,#f1e6de 70%,#f5eee7 100%)"><div class="a" style="left:0;top:0;width:60px;height:60px;filter:blur(.8px)"><div class="a" style="left:-6px;top:33px;width:72px;height:40px;background:#1f3a40;border-radius:26px 22px 0 0"></div><div class="a" style="left:20px;top:26px;width:13px;height:8px;background:#c39b88;"></div><div class="a" style="left:16.5px;top:6px;width:26px;height:25px;background:#d6ae9a;border-radius:7px 7px 12px 12px"></div><div class="a" style="left:14px;top:-1px;width:30px;height:12px;background:#2b2524;border-radius:10px 10px 3px 6px"></div><div class="a" style="left:14px;top:3px;width:3.5px;height:12px;background:#2b2524;"></div><div class="a" style="left:41px;top:3px;width:2.5px;height:7px;background:#2b2524;"></div><div class="a" style="left:18px;top:11px;width:10px;height:6px;background:transparent;border:1px solid #6a6a6a;border-radius:2px"></div><div class="a" style="left:30px;top:11px;width:10px;height:6px;background:transparent;border:1px solid #6a6a6a;border-radius:2px"></div><div class="a" style="left:20.5px;top:13.5px;width:4px;height:1.5px;background:#4a3a34;"></div><div class="a" style="left:32.5px;top:13.5px;width:4px;height:1.5px;background:#4a3a34;"></div><div class="a" style="left:25px;top:23px;width:8px;height:1.2px;background:#a27a6a;"></div><div class="a" style="left:22.5px;top:29px;width:15px;height:14px;background:#d6a690;border-radius:6px 7px 6px 8px"></div><div class="a" style="left:34px;top:40px;width:9px;height:24px;background:#d2a28c;transform:rotate(-25deg);border-radius:4px"></div></div></div>
<div class="a" style="left:861px;top:372px;width:72px;height:14.699999999999989px;background:rgba(34,34,34,.72)"></div>
<svg class="a" style="left:863px;top:374px" width="11" height="11"><rect x="3.5" y="1" width="3.5" height="6" rx="1.75" fill="#e04a4a"/><path d="M2 5.5c0 3 6.5 3 6.5 0M5.25 8.5v2M3 10.5h4.5" fill="none" stroke="#e04a4a" stroke-width=".9"/><path d="M.8 10.2L10.2 .8" stroke="#e04a4a" stroke-width="1.1"/></svg>
<div class="t" style="left:877.30px;top:374.63px;font-size:10px;color:#f4f4f4;transform:scaleX(0.956)">Jongee Park</div>
<div class="a" style="left:860.5px;top:391.3px;width:120.5px;height:67.7px;background:#232323"></div>
<div class="t" style="left:874.70px;top:419.59px;font-size:10.8px;color:#f2f2f2;font-weight:bold">Yusuf Kelestemur</div>
<div class="a" style="left:861px;top:444px;width:13px;height:14.5px;background:rgba(52,52,52,.8)"></div>
<svg class="a" style="left:862px;top:446px" width="11" height="11"><rect x="3.5" y="1" width="3.5" height="6" rx="1.75" fill="#e04a4a"/><path d="M2 5.5c0 3 6.5 3 6.5 0M5.25 8.5v2M3 10.5h4.5" fill="none" stroke="#e04a4a" stroke-width=".9"/><path d="M.8 10.2L10.2 .8" stroke="#e04a4a" stroke-width="1.1"/></svg>
<div class="a" style="left:0;top:546px;width:1024px;height:30px;background:linear-gradient(90deg,#223b46 0%,#213844 40%,#1f3244 70%,#1d2c47 85%,#1b2a4b 100%)"></div>
<svg class="a" style="left:11.5px;top:555px" width="13" height="13"><path d="M0 1.8L5.3 1v5H0zM6.2 .9L13 0v6H6.2zM0 6.9h5.3V12L0 11.2zM6.2 6.9H13V13L6.2 12.1z" fill="#fff"/></svg>
<div class="a" style="left:36px;top:546px;width:257.5px;height:30px;background:#f0f0f0"></div>
<svg class="a" style="left:44px;top:554px" width="14" height="14"><circle cx="8.5" cy="5.5" r="4.2" fill="none" stroke="#222" stroke-width="1.1"/><path d="M5.5 8.5L1 13" stroke="#222" stroke-width="1.2"/></svg>
<div class="t" style="left:66.00px;top:556.16px;font-size:11.5px;color:#3a3a3a;transform:scaleX(0.953)">Aramak için buraya yazın</div>
<svg class="a" style="left:305px;top:554px" width="14" height="13"><path d="M1.5 .5v12M10.5 .5v12M.5 1.5h11M.5 11.5h11" fill="none" stroke="#fff" stroke-width="1"/><rect x="3" y="3.5" width="6" height="6" fill="none" stroke="#fff" stroke-width="1"/><path d="M13 3.5v1.5M13 6.5v6" stroke="#fff" stroke-width="1.2"/></svg>
<svg class="a" style="left:341px;top:553.5px" width="17" height="14"><path d="M0 1.5h6l1.5 1.5H17v11H0z" fill="#f6c543"/><path d="M0 4h17v10H0z" fill="#fad45a"/><path d="M4.5 14V9h8v5" fill="none" stroke="#2f7fd0" stroke-width="2"/></svg>
<svg class="a" style="left:378px;top:552.5px" width="17" height="16"><rect x="6" y="3.5" width="10.5" height="9" fill="#fff"/><path d="M6 4l5 5 5.5-5.5" fill="none" stroke="#1d6bbf" stroke-width="1.2"/><path d="M0 2.5L9 .5v15L0 13.5z" fill="#0a64b8"/><ellipse cx="4.5" cy="8" rx="2.2" ry="3" fill="none" stroke="#fff" stroke-width="1.3"/></svg>
<div class="a" style="left:405.6px;top:546px;width:36px;height:30px;background:#3c4c58"></div>
<div class="a" style="left:405.6px;top:574px;width:36px;height:2px;background:#77b8ec"></div>
<div class="a" style="left:441.6px;top:546px;width:1.5px;height:30px;background:#485864"></div>
<div class="a" style="left:415px;top:552.5px;width:17px;height:16px;border-radius:6px;background:#4c8cf6"></div>
<div class="a" style="left:418.5px;top:557.5px;width:6.5px;height:6px;border-radius:1.5px;background:#fff"></div>
<div class="a" style="left:424.5px;top:557.5px;width:0;height:0;border-top:3px solid transparent;border-bottom:3px solid transparent;border-right:4px solid #fff"></div>
<svg class="a" style="left:450.5px;top:551.5px" width="19" height="19"><defs><linearGradient id="eg" x1="0" y1="0" x2="1" y2=".6"><stop offset="0" stop-color="#2fb0e8"/><stop offset=".55" stop-color="#3cc8a8"/><stop offset="1" stop-color="#62d83e"/></linearGradient><linearGradient id="eb" x1="0" y1="0" x2=".3" y2="1"><stop offset="0" stop-color="#1e8ee0"/><stop offset="1" stop-color="#0b4f9a"/></linearGradient></defs><path d="M1 9.5C1 4.5 5 .8 9.8 .8c5 0 8.6 3.6 8.6 7.6 0 3-2.3 5-5 5-2 0-3.6-.9-3.6-2.6 0-.7.4-1.1.4-1.8 0-1.6-1.6-2.6-3.4-2.6C3.6 6.4 1 8 1 9.5z" fill="url(#eg)"/><path d="M1 9.5c0-1.5 2.6-3.1 5.8-3.1 1.8 0 3.4 1 3.4 2.6 0 .7-.4 1.1-.4 1.8 0 1.7 1.6 2.6 3.6 2.6 2.7 0 5-2 5-5 .2 5.6-4.2 10.3-9.6 10.3C4.4 18.7 1 14.5 1 9.5z" fill="url(#eb)"/><path d="M6.5 10.5c0 3.5 3 6.5 7.5 6.2-2.5 1.5-6.5 1.3-8.8-1.6C3.8 13.3 4.5 11 6.5 10.5z" fill="#0a3f80" opacity=".6"/><ellipse cx="10.3" cy="10.6" rx="2.1" ry="1.9" fill="#15324a"/></svg>
<svg class="a" style="left:488.3px;top:552px" width="17.5" height="17.5"><circle cx="8.75" cy="8.75" r="8.5" fill="#1da462"/><path d="M8.75 .25A8.5 8.5 0 0 1 16.1 4.5H8.75A4.25 4.25 0 0 0 5 6.8L1.4 4.5A8.5 8.5 0 0 1 8.75 .25z" fill="#dd4b3e"/><path d="M16.1 4.5A8.5 8.5 0 0 1 9 17.25L12.4 11A4.25 4.25 0 0 0 12.4 6.5z" fill="#f6c026"/><circle cx="8.75" cy="8.75" r="4" fill="#fff"/><circle cx="8.75" cy="8.75" r="3.1" fill="#4b8bf5"/></svg>
<div class="a" style="left:482px;top:574px;width:30px;height:2px;background:#77b8ec"></div>
<svg class="a" style="left:849px;top:558px" width="10" height="6"><path d="M.5 5.5L5 1l4.5 4.5" fill="none" stroke="#fff" stroke-width="1"/></svg>
<svg class="a" style="left:867px;top:554.5px" width="9" height="13"><rect x="2.5" y=".5" width="4" height="8" rx="2" fill="#fff"/><path d="M.8 6.5c0 4 7.4 4 7.4 0M4.5 10.5v2" fill="none" stroke="#fff" stroke-width=".9"/></svg>
<svg class="a" style="left:883px;top:555px" width="14" height="12"><path d="M.5 4h2.5L6.5 1v10L3 8H.5z" fill="none" stroke="#fff" stroke-width=".9"/><path d="M8.5 4a2.5 2.5 0 0 1 0 4M10 2.5a5 5 0 0 1 0 7M11.5 1a7 7 0 0 1 0 10" fill="none" stroke="#fff" stroke-width=".9"/></svg>
<svg class="a" style="left:902px;top:555.5px" width="13" height="10"><path d="M1 .5v3M3 .5v3M.3 3.5h3.5v1.5l-1.5 1.5v3" fill="none" stroke="#fff" stroke-width=".9"/><rect x="4.5" y="3" width="7.5" height="5" fill="none" stroke="#fff" stroke-width=".9"/><rect x="5.5" y="4" width="5.5" height="3" fill="#fff"/></svg>
<svg class="a" style="left:921.5px;top:555px" width="11" height="11"><path d="M1 10.5a9.5 9.5 0 0 1 9.5-9.5M3 10.5a7.5 7.5 0 0 1 7.5-7.5M5 10.5a5.5 5.5 0 0 1 5.5-5.5M7 10.5a3.5 3.5 0 0 1 3.5-3.5" fill="none" stroke="#fff" stroke-width=".8"/><circle cx="9.5" cy="9.5" r="1.3" fill="#fff"/></svg>
<div class="t" style="left:949.50px;top:549.42px;font-size:9.5px;color:#fff;transform:scaleX(0.867)">11:06</div>
<div class="t" style="left:941.55px;top:562.92px;font-size:9.5px;color:#fff;transform:scaleX(0.840)">2.02.2021</div>
<svg class="a" style="left:992.5px;top:554.5px" width="17" height="17"><path d="M.5 .5h12v9H6L3 12.5V9.5H.5z" fill="#fff"/><path d="M2.5 3h8M2.5 5h8M2.5 7h6" stroke="#8c96a8" stroke-width=".6"/><circle cx="11" cy="11.2" r="5.2" fill="#2a2f38" stroke="#4a5260" stroke-width="1"/></svg>
<div class="t" style="left:1001.27px;top:561.94px;font-size:8px;color:#fff;font-weight:bold">1</div>
<div class="a" style="left:1020px;top:546px;width:1px;height:30px;background:#6a7890"></div>
</body></html>
